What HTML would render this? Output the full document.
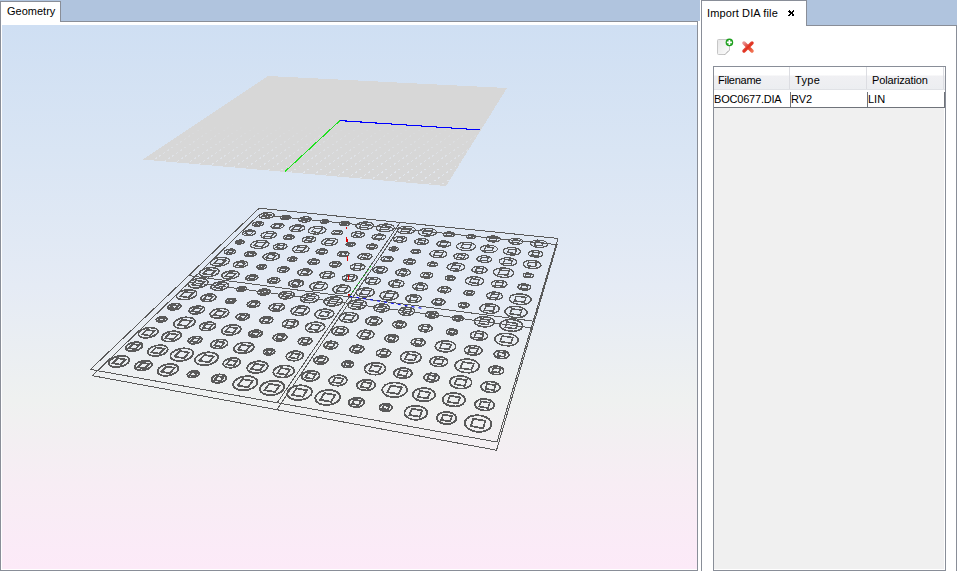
<!DOCTYPE html>
<html><head><meta charset="utf-8"><style>
*{margin:0;padding:0;box-sizing:border-box}
html,body{width:957px;height:571px;overflow:hidden;background:#b0c4de;font-family:"Liberation Sans",sans-serif;font-size:11px;color:#000}
.abs{position:absolute}
</style></head><body>
<div class="abs" style="left:0;top:21px;width:698px;height:550px;border:1px solid #898e98;background:#fff"></div>
<div class="abs" style="left:0;top:1px;width:61px;height:21px;border:1px solid #898e98;border-bottom:none;background:#fff"></div>
<div class="abs" style="left:7px;top:5px;font-size:11px">Geometry</div>
<svg width="695" height="544" viewBox="2 25 695 544" style="position:absolute;left:2px;top:25px">
<defs><linearGradient id="bg" x1="0" y1="0" x2="0" y2="1">
<stop offset="0" stop-color="rgb(207,223,243)"/><stop offset="0.23" stop-color="rgb(217,229,244)"/><stop offset="0.48" stop-color="rgb(229,235,245)"/><stop offset="0.69" stop-color="rgb(239,241,240)"/><stop offset="0.84" stop-color="rgb(247,237,244)"/><stop offset="1" stop-color="rgb(252,234,248)"/></linearGradient></defs>
<rect x="2" y="25" width="695" height="544" fill="url(#bg)"/>
<path d="M268,76 L507,88 L446,186 L143,159.5 Z" fill="#d7d7d7" shape-rendering="crispEdges"/>
<clipPath id="pc"><path d="M227.87,102.81 L487.79,118.86 L446.00,186.00 L143.00,159.50 Z"/></clipPath>
<mask id="pm"><rect x="0" y="0" width="957" height="571" fill="url(#pmg)"/></mask>
<linearGradient id="pmg" gradientUnits="userSpaceOnUse" x1="0" y1="122" x2="0" y2="172"><stop offset="0" stop-color="#000"/><stop offset="1" stop-color="#fff"/></linearGradient>
<g clip-path="url(#pc)" mask="url(#pm)"><path d="M-380.0,195.0 L-230.0,95.0 M-367.0,195.0 L-217.0,95.0 M-354.0,195.0 L-204.0,95.0 M-341.0,195.0 L-191.0,95.0 M-328.0,195.0 L-178.0,95.0 M-315.0,195.0 L-165.0,95.0 M-302.0,195.0 L-152.0,95.0 M-289.0,195.0 L-139.0,95.0 M-276.0,195.0 L-126.0,95.0 M-263.0,195.0 L-113.0,95.0 M-250.0,195.0 L-100.0,95.0 M-237.0,195.0 L-87.0,95.0 M-224.0,195.0 L-74.0,95.0 M-211.0,195.0 L-61.0,95.0 M-198.0,195.0 L-48.0,95.0 M-185.0,195.0 L-35.0,95.0 M-172.0,195.0 L-22.0,95.0 M-159.0,195.0 L-9.0,95.0 M-146.0,195.0 L4.0,95.0 M-133.0,195.0 L17.0,95.0 M-120.0,195.0 L30.0,95.0 M-107.0,195.0 L43.0,95.0 M-94.0,195.0 L56.0,95.0 M-81.0,195.0 L69.0,95.0 M-68.0,195.0 L82.0,95.0 M-55.0,195.0 L95.0,95.0 M-42.0,195.0 L108.0,95.0 M-29.0,195.0 L121.0,95.0 M-16.0,195.0 L134.0,95.0 M-3.0,195.0 L147.0,95.0 M10.0,195.0 L160.0,95.0 M23.0,195.0 L173.0,95.0 M36.0,195.0 L186.0,95.0 M49.0,195.0 L199.0,95.0 M62.0,195.0 L212.0,95.0 M75.0,195.0 L225.0,95.0 M88.0,195.0 L238.0,95.0 M101.0,195.0 L251.0,95.0 M114.0,195.0 L264.0,95.0 M127.0,195.0 L277.0,95.0 M140.0,195.0 L290.0,95.0 M153.0,195.0 L303.0,95.0 M166.0,195.0 L316.0,95.0 M179.0,195.0 L329.0,95.0 M192.0,195.0 L342.0,95.0 M205.0,195.0 L355.0,95.0 M218.0,195.0 L368.0,95.0 M231.0,195.0 L381.0,95.0 M244.0,195.0 L394.0,95.0 M257.0,195.0 L407.0,95.0 M270.0,195.0 L420.0,95.0 M283.0,195.0 L433.0,95.0 M296.0,195.0 L446.0,95.0 M309.0,195.0 L459.0,95.0 M322.0,195.0 L472.0,95.0 M335.0,195.0 L485.0,95.0 M348.0,195.0 L498.0,95.0 M361.0,195.0 L511.0,95.0 M374.0,195.0 L524.0,95.0 M387.0,195.0 L537.0,95.0 M400.0,195.0 L550.0,95.0 M413.0,195.0 L563.0,95.0 M426.0,195.0 L576.0,95.0 M439.0,195.0 L589.0,95.0 M452.0,195.0 L602.0,95.0 M465.0,195.0 L615.0,95.0 M478.0,195.0 L628.0,95.0 M491.0,195.0 L641.0,95.0 M504.0,195.0 L654.0,95.0 M517.0,195.0 L667.0,95.0 M530.0,195.0 L680.0,95.0 M543.0,195.0 L693.0,95.0 M556.0,195.0 L706.0,95.0 M569.0,195.0 L719.0,95.0 M582.0,195.0 L732.0,95.0 M595.0,195.0 L745.0,95.0 M608.0,195.0 L758.0,95.0 M621.0,195.0 L771.0,95.0 M634.0,195.0 L784.0,95.0 M647.0,195.0 L797.0,95.0 M660.0,195.0 L810.0,95.0 M673.0,195.0 L823.0,95.0 M686.0,195.0 L836.0,95.0 M699.0,195.0 L849.0,95.0 M712.0,195.0 L862.0,95.0 M725.0,195.0 L875.0,95.0 M738.0,195.0 L888.0,95.0 M751.0,195.0 L901.0,95.0 M764.0,195.0 L914.0,95.0 M777.0,195.0 L927.0,95.0 M790.0,195.0 L940.0,95.0 M803.0,195.0 L953.0,95.0 M816.0,195.0 L966.0,95.0 M829.0,195.0 L979.0,95.0 M842.0,195.0 L992.0,95.0 M855.0,195.0 L1005.0,95.0 M868.0,195.0 L1018.0,95.0 M881.0,195.0 L1031.0,95.0 M894.0,195.0 L1044.0,95.0 M907.0,195.0 L1057.0,95.0 M920.0,195.0 L1070.0,95.0 M933.0,195.0 L1083.0,95.0 M946.0,195.0 L1096.0,95.0 M959.0,195.0 L1109.0,95.0 M972.0,195.0 L1122.0,95.0 M985.0,195.0 L1135.0,95.0 M998.0,195.0 L1148.0,95.0 M1011.0,195.0 L1161.0,95.0 M1024.0,195.0 L1174.0,95.0 M1037.0,195.0 L1187.0,95.0 M1050.0,195.0 L1200.0,95.0 M1063.0,195.0 L1213.0,95.0 M1076.0,195.0 L1226.0,95.0 M1089.0,195.0 L1239.0,95.0 M1102.0,195.0 L1252.0,95.0 M1115.0,195.0 L1265.0,95.0 M1128.0,195.0 L1278.0,95.0 M1141.0,195.0 L1291.0,95.0 M1154.0,195.0 L1304.0,95.0 M1167.0,195.0 L1317.0,95.0" stroke="#e2e7ee" stroke-width="1" stroke-dasharray="2,3" fill="none" shape-rendering="crispEdges"/></g>
<path d="M285.3,171.3 L340,120.5" stroke="#1fe01f" stroke-width="1.1" fill="none" shape-rendering="crispEdges"/>
<path d="M340,120.6 L480,129.9" stroke="#0000ff" stroke-width="1.1" fill="none" shape-rendering="crispEdges"/>
<g fill="none" stroke="#5a5a5a" stroke-width="1" shape-rendering="crispEdges">
<path d="M259.20,208.20 L558.00,238.40 L497.00,442.00 L90.50,369.40 Z M400.07,222.44 L277.24,402.75 M188.65,275.62 L533.21,321.16 M259.20,214.70 L557.00,244.60 L496.50,450.20 L92.40,375.70 Z M398.99,228.73 L276.85,409.70 M189.39,282.08 L532.45,328.05"/>
</g>
<g>
</g><g fill="none" stroke="#5a5a5a" stroke-width="1.20" shape-rendering="crispEdges"><path d="M273.52,216.20 L271.82,217.32 L269.33,218.16 L266.40,218.59 L263.51,218.54 L261.10,218.03 L259.54,217.13 L259.07,215.99 L259.74,214.77 L261.45,213.67 L263.93,212.85 L266.81,212.43 L269.66,212.47 L272.05,212.96 L273.63,213.84 L274.15,214.98 Z M264.86,213.76 L271.18,214.42 L268.37,217.22 L262.02,216.55 Z"/><path d="M290.52,217.96 L289.37,218.75 L287.63,219.34 L285.59,219.65 L283.55,219.62 L281.83,219.25 L280.70,218.62 L280.32,217.81 L280.75,216.95 L281.92,216.17 L283.64,215.59 L285.66,215.29 L287.68,215.32 L289.39,215.67 L290.53,216.30 L290.93,217.10 Z M284.33,216.24 L288.82,216.70 L286.93,218.68 L282.42,218.21 Z"/><path d="M310.94,220.08 L309.58,221.04 L307.50,221.77 L305.02,222.14 L302.54,222.10 L300.42,221.66 L299.00,220.88 L298.50,219.89 L298.97,218.84 L300.35,217.89 L302.41,217.18 L304.86,216.81 L307.32,216.85 L309.42,217.28 L310.85,218.05 L311.38,219.03 Z M303.29,217.97 L308.79,218.54 L306.60,220.96 L301.08,220.38 Z"/><path d="M328.62,221.91 L327.73,222.56 L326.35,223.05 L324.70,223.30 L323.03,223.27 L321.59,222.97 L320.61,222.45 L320.23,221.78 L320.51,221.07 L321.41,220.43 L322.78,219.95 L324.41,219.70 L326.07,219.73 L327.51,220.02 L328.49,220.54 L328.88,221.20 Z M323.40,220.49 L327.12,220.87 L325.72,222.50 L321.99,222.11 Z"/><path d="M349.61,224.09 L348.54,224.91 L346.84,225.52 L344.77,225.84 L342.66,225.80 L340.84,225.43 L339.57,224.76 L339.06,223.92 L339.37,223.03 L340.46,222.22 L342.15,221.61 L344.19,221.31 L346.28,221.34 L348.10,221.71 L349.37,222.36 L349.90,223.20 Z M342.96,222.29 L347.66,222.78 L346.01,224.83 L341.29,224.34 Z"/><path d="M373.22,226.54 L371.52,227.89 L368.77,228.91 L365.39,229.43 L361.91,229.37 L358.86,228.74 L356.73,227.65 L355.83,226.26 L356.28,224.78 L358.01,223.45 L360.74,222.46 L364.07,221.96 L367.49,222.01 L370.50,222.61 L372.65,223.68 L373.61,225.06 Z M362.12,223.57 L369.89,224.37 L367.35,227.77 L359.53,226.95 Z"/><path d="M393.92,228.69 L392.27,230.06 L389.54,231.08 L386.15,231.61 L382.63,231.55 L379.52,230.91 L377.31,229.80 L376.33,228.39 L376.71,226.90 L378.39,225.55 L381.10,224.55 L384.44,224.04 L387.90,224.10 L390.97,224.71 L393.20,225.79 L394.24,227.19 Z M382.56,225.68 L390.44,226.49 L388.05,229.93 L380.10,229.10 Z"/><path d="M414.95,230.87 L413.36,232.26 L410.65,233.30 L407.25,233.83 L403.68,233.77 L400.51,233.12 L398.22,231.99 L397.16,230.57 L397.47,229.05 L399.10,227.69 L401.79,226.67 L405.13,226.16 L408.63,226.21 L411.77,226.84 L414.08,227.94 L415.20,229.35 Z M403.31,227.82 L411.33,228.64 L409.08,232.12 L401.01,231.28 Z"/><path d="M436.33,233.08 L434.79,234.49 L432.10,235.55 L428.69,236.08 L425.09,236.02 L421.84,235.36 L419.47,234.22 L418.32,232.77 L418.56,231.24 L420.14,229.86 L422.80,228.83 L426.16,228.31 L429.70,228.37 L432.91,229.00 L435.30,230.11 L436.50,231.55 Z M424.41,229.99 L432.55,230.83 L430.46,234.36 L422.25,233.50 Z"/><path d="M454.56,234.97 L453.64,235.85 L452.01,236.50 L449.91,236.83 L447.68,236.79 L445.65,236.39 L444.13,235.68 L443.37,234.78 L443.46,233.82 L444.39,232.96 L446.02,232.32 L448.09,231.99 L450.30,232.03 L452.32,232.43 L453.84,233.12 L454.62,234.02 Z M447.05,233.04 L452.15,233.57 L450.95,235.76 L445.84,235.23 Z"/><path d="M475.48,237.14 L474.77,237.85 L473.47,238.39 L471.78,238.66 L469.96,238.62 L468.30,238.29 L467.04,237.72 L466.37,236.98 L466.41,236.20 L467.13,235.50 L468.42,234.98 L470.10,234.71 L471.90,234.74 L473.55,235.07 L474.82,235.64 L475.49,236.37 Z M469.30,235.57 L473.46,236.00 L472.58,237.79 L468.40,237.35 Z"/><path d="M500.17,239.71 L499.15,240.79 L497.22,241.60 L494.68,242.01 L491.91,241.96 L489.36,241.45 L487.40,240.57 L486.34,239.45 L486.34,238.27 L487.38,237.20 L489.30,236.41 L491.82,236.01 L494.54,236.05 L497.08,236.55 L499.04,237.41 L500.13,238.52 Z M490.67,237.31 L497.02,237.96 L495.83,240.68 L489.45,240.02 Z"/><path d="M522.97,242.07 L521.99,243.17 L520.09,243.99 L517.53,244.40 L514.73,244.35 L512.12,243.84 L510.10,242.94 L508.97,241.81 L508.90,240.61 L509.90,239.53 L511.80,238.72 L514.32,238.32 L517.08,238.37 L519.67,238.87 L521.70,239.74 L522.86,240.87 Z M513.23,239.63 L519.68,240.30 L518.62,243.06 L512.13,242.38 Z"/><path d="M547.49,244.61 L546.40,245.93 L544.16,246.92 L541.12,247.43 L537.75,247.36 L534.58,246.74 L532.09,245.66 L530.67,244.29 L530.52,242.85 L531.65,241.55 L533.88,240.59 L536.87,240.10 L540.19,240.16 L543.33,240.76 L545.82,241.81 L547.29,243.17 Z M535.65,241.68 L543.43,242.48 L542.34,245.80 L534.50,244.98 Z"/></g><g fill="none" stroke="#5a5a5a" stroke-width="1.25" shape-rendering="crispEdges"><path d="M262.92,224.50 L261.70,225.31 L259.91,225.92 L257.83,226.23 L255.78,226.20 L254.07,225.83 L252.97,225.17 L252.64,224.34 L253.14,223.45 L254.37,222.65 L256.15,222.05 L258.21,221.75 L260.24,221.78 L261.94,222.14 L263.05,222.79 L263.40,223.62 Z M256.80,222.72 L261.30,223.20 L259.25,225.24 L254.74,224.75 Z"/><path d="M283.37,226.70 L281.93,227.69 L279.78,228.44 L277.26,228.82 L274.75,228.77 L272.65,228.31 L271.27,227.51 L270.83,226.49 L271.38,225.41 L272.84,224.44 L274.97,223.71 L277.46,223.33 L279.94,223.37 L282.03,223.82 L283.42,224.61 L283.89,225.62 Z M275.80,224.52 L281.31,225.11 L278.93,227.60 L273.41,227.00 Z"/><path d="M304.26,228.95 L302.59,230.14 L300.05,231.03 L297.04,231.49 L294.03,231.44 L291.48,230.89 L289.78,229.92 L289.20,228.69 L289.80,227.39 L291.49,226.22 L294.01,225.35 L296.97,224.90 L299.94,224.95 L302.47,225.48 L304.19,226.43 L304.82,227.65 Z M295.05,226.33 L301.68,227.04 L298.98,230.03 L292.31,229.31 Z"/><path d="M325.34,231.22 L323.49,232.59 L320.63,233.62 L317.19,234.15 L313.73,234.08 L310.76,233.45 L308.76,232.33 L308.02,230.92 L308.65,229.42 L310.53,228.07 L313.37,227.06 L316.74,226.55 L320.16,226.61 L323.09,227.23 L325.11,228.31 L325.91,229.71 Z M314.62,228.19 L322.27,229.01 L319.34,232.46 L311.64,231.62 Z"/><path d="M342.47,233.06 L341.36,233.91 L339.61,234.55 L337.50,234.87 L335.35,234.83 L333.50,234.44 L332.22,233.75 L331.71,232.87 L332.05,231.94 L333.17,231.09 L334.91,230.46 L336.99,230.14 L339.12,230.18 L340.97,230.57 L342.25,231.25 L342.78,232.12 Z M335.72,231.17 L340.51,231.68 L338.78,233.83 L333.98,233.31 Z"/><path d="M364.26,235.40 L362.96,236.44 L360.87,237.22 L358.31,237.62 L355.69,237.57 L353.40,237.09 L351.80,236.24 L351.13,235.16 L351.48,234.03 L352.80,233.00 L354.88,232.23 L357.41,231.84 L360.00,231.89 L362.27,232.36 L363.88,233.19 L364.58,234.26 Z M355.92,233.09 L361.78,233.72 L359.81,236.34 L353.92,235.70 Z"/><path d="M385.31,237.66 L384.05,238.72 L381.97,239.51 L379.41,239.91 L376.75,239.86 L374.41,239.37 L372.75,238.51 L372.02,237.42 L372.32,236.27 L373.61,235.22 L375.67,234.45 L378.20,234.05 L380.82,234.10 L383.14,234.58 L384.81,235.42 L385.58,236.51 Z M376.76,235.32 L382.72,235.96 L380.86,238.62 L374.87,237.97 Z"/><path d="M406.71,239.96 L405.48,241.03 L403.43,241.83 L400.85,242.24 L398.16,242.19 L395.77,241.69 L394.05,240.82 L393.26,239.71 L393.51,238.54 L394.75,237.49 L396.80,236.70 L399.34,236.30 L401.99,236.35 L404.36,236.84 L406.09,237.69 L406.92,238.79 Z M397.94,237.59 L404.00,238.24 L402.25,240.93 L396.17,240.27 Z"/><path d="M428.46,242.30 L427.28,243.39 L425.24,244.20 L422.66,244.61 L419.93,244.56 L417.49,244.05 L415.71,243.17 L414.85,242.04 L415.04,240.86 L416.24,239.79 L418.27,238.99 L420.82,238.59 L423.51,238.64 L425.93,239.13 L427.72,240.00 L428.61,241.11 Z M419.48,239.89 L425.63,240.55 L424.01,243.28 L417.82,242.61 Z"/><path d="M450.58,244.68 L449.44,245.78 L447.42,246.60 L444.83,247.02 L442.07,246.96 L439.58,246.45 L437.73,245.55 L436.80,244.41 L436.93,243.21 L438.09,242.13 L440.10,241.32 L442.66,240.91 L445.38,240.97 L447.85,241.47 L449.71,242.35 L450.67,243.47 Z M441.37,242.23 L447.63,242.90 L446.12,245.67 L439.83,244.99 Z"/><path d="M475.51,247.36 L474.03,248.87 L471.33,250.00 L467.82,250.57 L464.05,250.49 L460.60,249.78 L458.01,248.55 L456.68,246.99 L456.78,245.35 L458.30,243.87 L460.98,242.77 L464.43,242.21 L468.14,242.28 L471.55,242.97 L474.15,244.17 L475.54,245.71 Z M462.76,244.01 L471.35,244.93 L469.50,248.71 L460.85,247.78 Z"/><path d="M497.27,249.70 L496.03,251.04 L493.68,252.05 L490.58,252.56 L487.22,252.49 L484.13,251.85 L481.77,250.75 L480.50,249.37 L480.52,247.90 L481.80,246.58 L484.14,245.60 L487.18,245.10 L490.49,245.17 L493.55,245.78 L495.92,246.85 L497.23,248.23 Z M485.78,246.71 L493.46,247.53 L491.99,250.91 L484.25,250.07 Z"/><path d="M520.56,252.20 L519.38,253.57 L517.05,254.58 L513.95,255.10 L510.55,255.03 L507.38,254.38 L504.94,253.27 L503.58,251.86 L503.52,250.37 L504.74,249.03 L507.06,248.04 L510.12,247.54 L513.46,247.60 L516.59,248.23 L519.05,249.32 L520.44,250.71 Z M508.78,249.17 L516.59,250.00 L515.28,253.43 L507.42,252.57 Z"/><path d="M542.89,254.60 L541.93,255.77 L540.00,256.63 L537.38,257.07 L534.48,257.01 L531.76,256.46 L529.62,255.51 L528.40,254.31 L528.28,253.03 L529.26,251.89 L531.19,251.04 L533.77,250.61 L536.63,250.67 L539.33,251.20 L541.47,252.13 L542.72,253.33 Z M532.71,252.01 L539.41,252.72 L538.44,255.65 L531.70,254.92 Z"/></g><g fill="none" stroke="#5a5a5a" stroke-width="1.29" shape-rendering="crispEdges"><path d="M255.10,233.49 L253.57,234.51 L251.35,235.27 L248.78,235.66 L246.26,235.62 L244.17,235.14 L242.84,234.32 L242.46,233.27 L243.09,232.16 L244.63,231.15 L246.84,230.40 L249.37,230.02 L251.87,230.06 L253.95,230.53 L255.29,231.34 L255.70,232.38 Z M247.62,231.24 L253.13,231.86 L250.56,234.41 L245.02,233.79 Z"/><path d="M276.01,235.83 L274.24,237.05 L271.62,237.97 L268.56,238.44 L265.52,238.38 L262.99,237.81 L261.34,236.81 L260.84,235.55 L261.54,234.21 L263.32,233.00 L265.92,232.11 L268.95,231.65 L271.94,231.70 L274.45,232.26 L276.11,233.23 L276.67,234.48 Z M266.91,233.12 L273.55,233.85 L270.62,236.93 L263.94,236.18 Z"/><path d="M293.89,237.82 L292.68,238.69 L290.87,239.33 L288.72,239.66 L286.58,239.62 L284.77,239.22 L283.58,238.51 L283.17,237.62 L283.61,236.67 L284.83,235.82 L286.64,235.18 L288.76,234.86 L290.88,234.90 L292.68,235.29 L293.89,235.98 L294.31,236.87 Z M287.37,235.90 L292.09,236.42 L290.12,238.60 L285.38,238.07 Z"/><path d="M315.37,240.21 L313.95,241.27 L311.77,242.07 L309.17,242.47 L306.56,242.42 L304.33,241.92 L302.83,241.06 L302.29,239.97 L302.78,238.81 L304.21,237.77 L306.38,236.99 L308.94,236.59 L311.53,236.64 L313.74,237.12 L315.25,237.97 L315.82,239.05 Z M307.31,237.87 L313.09,238.51 L310.82,241.17 L305.01,240.52 Z"/><path d="M337.33,242.66 L335.68,243.94 L333.12,244.89 L330.02,245.38 L326.87,245.31 L324.17,244.72 L322.32,243.68 L321.61,242.36 L322.13,240.97 L323.80,239.71 L326.35,238.78 L329.40,238.31 L332.50,238.37 L335.18,238.95 L337.04,239.96 L337.80,241.27 Z M327.51,239.84 L334.48,240.61 L331.92,243.81 L324.91,243.02 Z"/><path d="M355.04,244.64 L354.14,245.36 L352.71,245.90 L350.97,246.18 L349.19,246.14 L347.64,245.80 L346.56,245.21 L346.11,244.46 L346.36,243.67 L347.27,242.95 L348.70,242.42 L350.42,242.15 L352.19,242.18 L353.73,242.52 L354.81,243.10 L355.28,243.84 Z M349.39,243.02 L353.38,243.47 L352.00,245.29 L348.01,244.84 Z"/><path d="M377.53,247.15 L376.45,248.06 L374.68,248.74 L372.51,249.09 L370.26,249.04 L368.29,248.61 L366.90,247.87 L366.29,246.92 L366.56,245.92 L367.66,245.02 L369.41,244.35 L371.57,244.01 L373.79,244.05 L375.75,244.47 L377.15,245.21 L377.78,246.14 Z M370.33,245.11 L375.36,245.67 L373.75,247.97 L368.69,247.40 Z"/><path d="M398.23,249.45 L397.38,250.20 L395.97,250.75 L394.22,251.03 L392.39,250.99 L390.78,250.64 L389.61,250.04 L389.08,249.27 L389.25,248.45 L390.11,247.72 L391.51,247.17 L393.25,246.89 L395.06,246.93 L396.67,247.27 L397.84,247.87 L398.39,248.64 Z M392.29,247.79 L396.40,248.25 L395.19,250.12 L391.05,249.66 Z"/><path d="M420.37,251.92 L419.55,252.68 L418.16,253.24 L416.40,253.52 L414.55,253.48 L412.89,253.13 L411.69,252.51 L411.11,251.73 L411.24,250.91 L412.07,250.16 L413.46,249.60 L415.20,249.32 L417.04,249.36 L418.68,249.71 L419.90,250.32 L420.49,251.09 Z M414.28,250.23 L418.47,250.70 L417.33,252.60 L413.12,252.13 Z"/><path d="M446.53,254.84 L445.13,256.20 L442.67,257.22 L439.52,257.74 L436.18,257.67 L433.15,257.02 L430.92,255.90 L429.82,254.49 L430.01,253.00 L431.43,251.65 L433.88,250.66 L436.99,250.16 L440.28,250.23 L443.27,250.85 L445.51,251.94 L446.66,253.34 Z M435.40,251.79 L442.97,252.63 L441.11,256.06 L433.49,255.21 Z"/><path d="M468.17,257.25 L467.04,258.42 L464.99,259.29 L462.33,259.72 L459.48,259.66 L456.88,259.11 L454.93,258.16 L453.92,256.95 L454.01,255.67 L455.17,254.53 L457.21,253.67 L459.84,253.25 L462.65,253.30 L465.22,253.84 L467.18,254.78 L468.22,255.97 Z M458.56,254.64 L465.05,255.36 L463.61,258.30 L457.08,257.56 Z"/><path d="M491.52,259.86 L490.44,261.04 L488.41,261.92 L485.74,262.36 L482.85,262.30 L480.19,261.74 L478.17,260.77 L477.09,259.54 L477.12,258.25 L478.23,257.09 L480.25,256.22 L482.88,255.79 L485.73,255.85 L488.36,256.39 L490.39,257.34 L491.51,258.56 Z M481.66,257.21 L488.27,257.94 L486.97,260.91 L480.32,260.17 Z"/><path d="M516.67,262.66 L515.44,264.08 L513.06,265.15 L509.88,265.68 L506.40,265.60 L503.17,264.92 L500.68,263.75 L499.31,262.28 L499.26,260.72 L500.52,259.32 L502.90,258.28 L506.03,257.76 L509.45,257.84 L512.64,258.49 L515.14,259.63 L516.56,261.10 Z M504.65,259.47 L512.63,260.35 L511.26,263.93 L503.22,263.03 Z"/><path d="M540.88,265.36 L539.71,266.80 L537.36,267.88 L534.17,268.42 L530.65,268.34 L527.34,267.65 L524.76,266.46 L523.30,264.96 L523.16,263.38 L524.37,261.96 L526.71,260.91 L529.85,260.39 L533.31,260.46 L536.58,261.13 L539.17,262.29 L540.68,263.77 Z M528.55,262.11 L536.67,263.01 L535.47,266.65 L527.29,265.73 Z"/></g><g fill="none" stroke="#5a5a5a" stroke-width="1.34" shape-rendering="crispEdges"><path d="M243.84,242.51 L242.79,243.22 L241.27,243.75 L239.52,244.01 L237.80,243.98 L236.39,243.65 L235.50,243.08 L235.26,242.35 L235.70,241.57 L236.76,240.87 L238.27,240.35 L240.01,240.09 L241.71,240.12 L243.11,240.45 L244.01,241.01 L244.27,241.74 Z M238.79,240.94 L242.53,241.37 L240.74,243.15 L236.99,242.71 Z"/><path d="M268.18,245.33 L266.10,246.78 L263.04,247.87 L259.46,248.43 L255.94,248.35 L253.01,247.67 L251.13,246.48 L250.58,244.98 L251.43,243.39 L253.54,241.96 L256.57,240.90 L260.08,240.37 L263.55,240.43 L266.45,241.09 L268.36,242.25 L268.97,243.74 Z M257.69,242.10 L265.37,242.99 L261.89,246.64 L254.16,245.74 Z"/><path d="M286.45,247.44 L284.94,248.53 L282.68,249.35 L280.03,249.76 L277.40,249.70 L275.18,249.19 L273.73,248.30 L273.26,247.18 L273.83,245.98 L275.35,244.91 L277.59,244.11 L280.21,243.71 L282.81,243.76 L285.01,244.26 L286.48,245.13 L286.98,246.25 Z M278.47,245.02 L284.26,245.68 L281.78,248.42 L275.97,247.75 Z"/><path d="M308.44,249.99 L306.69,251.30 L304.04,252.28 L300.87,252.78 L297.70,252.71 L295.01,252.09 L293.22,251.02 L292.59,249.66 L293.22,248.23 L294.98,246.93 L297.62,245.98 L300.74,245.49 L303.86,245.56 L306.53,246.15 L308.34,247.20 L309.01,248.55 Z M298.73,247.06 L305.71,247.87 L302.90,251.17 L295.88,250.35 Z"/><path d="M327.25,252.16 L326.06,253.09 L324.22,253.78 L322.01,254.13 L319.77,254.09 L317.85,253.65 L316.55,252.89 L316.05,251.93 L316.44,250.91 L317.64,250.00 L319.47,249.32 L321.66,248.97 L323.87,249.02 L325.78,249.45 L327.09,250.19 L327.61,251.15 Z M320.30,250.09 L325.26,250.66 L323.38,253.00 L318.40,252.42 Z"/><path d="M348.73,254.65 L347.57,255.59 L345.74,256.29 L343.52,256.64 L341.26,256.60 L339.30,256.15 L337.94,255.38 L337.39,254.41 L337.73,253.38 L338.90,252.45 L340.72,251.76 L342.92,251.41 L345.16,251.46 L347.11,251.89 L348.47,252.65 L349.04,253.62 Z M341.59,252.54 L346.64,253.12 L344.86,255.49 L339.79,254.90 Z"/><path d="M371.73,257.31 L370.38,258.46 L368.19,259.32 L365.50,259.75 L362.73,259.69 L360.31,259.15 L358.61,258.20 L357.88,257.01 L358.24,255.75 L359.61,254.61 L361.79,253.77 L364.44,253.35 L367.17,253.41 L369.58,253.94 L371.29,254.86 L372.05,256.05 Z M362.90,254.73 L369.08,255.44 L367.06,258.34 L360.84,257.62 Z"/><path d="M392.79,259.75 L391.70,260.71 L389.91,261.43 L387.67,261.80 L385.35,261.75 L383.30,261.29 L381.83,260.49 L381.17,259.49 L381.41,258.43 L382.52,257.48 L384.31,256.77 L386.52,256.41 L388.81,256.46 L390.85,256.91 L392.33,257.69 L393.01,258.68 Z M385.28,257.57 L390.50,258.18 L388.92,260.61 L383.67,260.00 Z"/><path d="M415.40,262.36 L414.35,263.34 L412.56,264.07 L410.32,264.44 L407.97,264.39 L405.87,263.92 L404.35,263.12 L403.63,262.10 L403.82,261.02 L404.89,260.05 L406.66,259.34 L408.88,258.98 L411.21,259.03 L413.29,259.48 L414.82,260.27 L415.56,261.28 Z M407.69,260.16 L413.00,260.77 L411.52,263.24 L406.18,262.62 Z"/><path d="M437.24,264.89 L436.43,265.69 L435.01,266.28 L433.20,266.58 L431.29,266.54 L429.56,266.16 L428.29,265.50 L427.66,264.67 L427.77,263.79 L428.60,263.00 L430.01,262.42 L431.80,262.12 L433.70,262.17 L435.41,262.54 L436.69,263.19 L437.33,264.01 Z M430.88,263.09 L435.23,263.59 L434.13,265.60 L429.76,265.10 Z"/><path d="M464.41,268.03 L463.02,269.48 L460.52,270.56 L457.28,271.10 L453.82,271.02 L450.67,270.33 L448.32,269.14 L447.12,267.63 L447.25,266.05 L448.67,264.62 L451.16,263.57 L454.35,263.04 L457.75,263.12 L460.87,263.79 L463.23,264.95 L464.48,266.44 Z M452.78,264.78 L460.64,265.68 L458.86,269.32 L450.94,268.40 Z"/><path d="M486.90,270.64 L485.78,271.87 L483.69,272.79 L480.96,273.25 L478.01,273.18 L475.29,272.59 L473.24,271.57 L472.15,270.29 L472.18,268.93 L473.33,267.71 L475.41,266.81 L478.11,266.36 L481.01,266.43 L483.70,267.00 L485.77,268.00 L486.89,269.28 Z M476.84,267.85 L483.59,268.62 L482.23,271.73 L475.44,270.95 Z"/><path d="M513.82,273.75 L512.38,275.45 L509.59,276.71 L505.88,277.34 L501.84,277.24 L498.08,276.43 L495.20,275.03 L493.63,273.26 L493.59,271.41 L495.08,269.74 L497.86,268.52 L501.50,267.90 L505.46,268.00 L509.17,268.78 L512.06,270.14 L513.70,271.89 Z M499.87,269.93 L509.14,270.99 L507.51,275.26 L498.17,274.17 Z"/><path d="M533.34,276.01 L532.66,276.86 L531.31,277.48 L529.48,277.80 L527.46,277.75 L525.57,277.34 L524.09,276.65 L523.25,275.76 L523.17,274.83 L523.87,273.99 L525.22,273.37 L527.04,273.06 L529.03,273.11 L530.91,273.51 L532.39,274.20 L533.25,275.08 Z M526.28,274.09 L530.95,274.62 L530.23,276.76 L525.55,276.22 Z"/></g><g fill="none" stroke="#5a5a5a" stroke-width="1.38" shape-rendering="crispEdges"><path d="M235.21,252.28 L233.85,253.20 L231.91,253.88 L229.67,254.23 L227.50,254.18 L225.71,253.75 L224.60,253.00 L224.31,252.05 L224.90,251.04 L226.27,250.14 L228.20,249.46 L230.41,249.12 L232.56,249.17 L234.34,249.59 L235.46,250.33 L235.77,251.27 Z M228.84,250.23 L233.57,250.79 L231.25,253.10 L226.50,252.53 Z"/><path d="M255.66,254.74 L254.33,255.67 L252.40,256.36 L250.16,256.71 L247.96,256.66 L246.13,256.22 L244.97,255.46 L244.64,254.50 L245.19,253.48 L246.52,252.56 L248.44,251.88 L250.66,251.53 L252.84,251.58 L254.65,252.01 L255.83,252.76 L256.18,253.72 Z M249.13,252.65 L253.94,253.23 L251.70,255.57 L246.87,254.99 Z"/><path d="M278.77,257.51 L276.92,258.86 L274.16,259.87 L270.94,260.38 L267.74,260.31 L265.07,259.67 L263.33,258.56 L262.79,257.16 L263.52,255.68 L265.40,254.35 L268.13,253.36 L271.31,252.87 L274.45,252.94 L277.10,253.56 L278.86,254.64 L279.45,256.03 Z M269.17,254.49 L276.16,255.32 L273.10,258.72 L266.06,257.87 Z"/><path d="M296.55,259.65 L295.53,260.41 L294.00,260.99 L292.19,261.27 L290.37,261.23 L288.84,260.87 L287.82,260.24 L287.47,259.44 L287.84,258.60 L288.87,257.84 L290.39,257.28 L292.19,256.99 L293.98,257.03 L295.51,257.39 L296.53,258.01 L296.90,258.80 Z M291.02,257.92 L295.02,258.40 L293.36,260.33 L289.35,259.85 Z"/><path d="M319.13,262.36 L317.90,263.33 L316.01,264.05 L313.74,264.41 L311.46,264.36 L309.50,263.90 L308.19,263.10 L307.70,262.10 L308.11,261.04 L309.36,260.08 L311.24,259.37 L313.48,259.01 L315.74,259.06 L317.68,259.51 L319.01,260.29 L319.52,261.29 Z M312.07,260.18 L317.13,260.78 L315.17,263.22 L310.08,262.61 Z"/><path d="M341.02,264.99 L339.82,265.97 L337.94,266.70 L335.67,267.07 L333.36,267.02 L331.36,266.55 L329.99,265.74 L329.45,264.72 L329.81,263.64 L331.02,262.67 L332.90,261.95 L335.14,261.59 L337.43,261.64 L339.42,262.10 L340.80,262.89 L341.36,263.91 Z M333.77,262.77 L338.92,263.39 L337.05,265.86 L331.88,265.24 Z"/><path d="M364.48,267.80 L363.07,269.01 L360.82,269.90 L358.07,270.35 L355.24,270.29 L352.78,269.71 L351.05,268.72 L350.34,267.47 L350.72,266.15 L352.14,264.97 L354.38,264.09 L357.10,263.65 L359.89,263.71 L362.33,264.27 L364.07,265.24 L364.82,266.48 Z M355.49,265.09 L361.80,265.85 L359.69,268.88 L353.34,268.11 Z"/><path d="M387.16,270.53 L385.80,271.75 L383.57,272.66 L380.81,273.11 L377.94,273.04 L375.42,272.46 L373.63,271.46 L372.84,270.19 L373.16,268.85 L374.54,267.64 L376.76,266.76 L379.49,266.31 L382.31,266.38 L384.82,266.94 L386.62,267.93 L387.45,269.19 Z M377.94,267.77 L384.36,268.54 L382.37,271.62 L375.91,270.84 Z"/><path d="M410.25,273.30 L408.94,274.54 L406.73,275.46 L403.96,275.92 L401.05,275.85 L398.47,275.26 L396.61,274.24 L395.75,272.95 L396.00,271.59 L397.34,270.37 L399.54,269.47 L402.28,269.02 L405.14,269.09 L407.70,269.66 L409.57,270.66 L410.47,271.94 Z M400.78,270.50 L407.32,271.28 L405.46,274.40 L398.89,273.61 Z"/><path d="M432.51,275.98 L431.46,277.02 L429.65,277.79 L427.34,278.18 L424.91,278.12 L422.72,277.62 L421.11,276.76 L420.33,275.67 L420.49,274.53 L421.55,273.50 L423.36,272.74 L425.64,272.36 L428.05,272.42 L430.22,272.91 L431.83,273.75 L432.64,274.83 Z M424.45,273.62 L429.97,274.28 L428.54,276.90 L422.99,276.23 Z"/><path d="M455.22,278.70 L454.40,279.55 L452.96,280.18 L451.10,280.50 L449.12,280.44 L447.32,280.04 L445.98,279.34 L445.29,278.45 L445.37,277.52 L446.19,276.68 L447.63,276.06 L449.47,275.75 L451.44,275.80 L453.23,276.20 L454.57,276.89 L455.27,277.77 Z M448.56,276.77 L453.08,277.31 L452.02,279.46 L447.48,278.91 Z"/><path d="M483.47,282.10 L482.09,283.63 L479.55,284.78 L476.22,285.35 L472.63,285.26 L469.34,284.51 L466.85,283.24 L465.55,281.64 L465.62,279.95 L467.03,278.44 L469.57,277.32 L472.84,276.77 L476.37,276.86 L479.62,277.57 L482.12,278.82 L483.47,280.40 Z M471.29,278.61 L479.47,279.59 L477.78,283.46 L469.54,282.46 Z"/><path d="M506.87,284.91 L505.76,286.22 L503.64,287.20 L500.84,287.68 L497.77,287.60 L494.94,286.97 L492.76,285.88 L491.58,284.51 L491.56,283.07 L492.69,281.77 L494.81,280.82 L497.58,280.34 L500.59,280.42 L503.40,281.03 L505.58,282.10 L506.81,283.46 Z M496.33,281.92 L503.36,282.76 L502.08,286.07 L495.01,285.22 Z"/><path d="M530.81,287.78 L529.94,288.89 L528.20,289.71 L525.87,290.12 L523.30,290.05 L520.89,289.51 L519.02,288.60 L517.96,287.44 L517.87,286.23 L518.77,285.14 L520.50,284.33 L522.81,283.93 L525.35,284.00 L527.73,284.52 L529.61,285.42 L530.70,286.56 Z M521.83,285.26 L527.77,285.97 L526.84,288.76 L520.88,288.04 Z"/></g><g fill="none" stroke="#5a5a5a" stroke-width="1.43" shape-rendering="crispEdges"><path d="M228.46,262.77 L226.17,264.33 L222.91,265.50 L219.18,266.09 L215.55,266.00 L212.60,265.25 L210.78,263.97 L210.36,262.35 L211.39,260.64 L213.70,259.10 L216.93,257.97 L220.60,257.40 L224.16,257.48 L227.09,258.20 L228.94,259.45 L229.42,261.05 Z M217.96,259.27 L225.78,260.23 L221.85,264.16 L213.97,263.17 Z"/><path d="M247.08,265.09 L245.42,266.26 L243.02,267.14 L240.25,267.57 L237.53,267.51 L235.30,266.95 L233.89,265.99 L233.51,264.77 L234.22,263.49 L235.89,262.33 L238.27,261.48 L241.01,261.05 L243.68,261.11 L245.90,261.65 L247.33,262.60 L247.75,263.80 Z M239.09,262.45 L244.99,263.19 L242.18,266.14 L236.25,265.39 Z"/><path d="M266.09,267.46 L265.01,268.25 L263.42,268.84 L261.57,269.14 L259.74,269.09 L258.22,268.72 L257.24,268.07 L256.94,267.24 L257.37,266.37 L258.46,265.59 L260.04,265.01 L261.87,264.72 L263.68,264.76 L265.20,265.13 L266.19,265.77 L266.50,266.59 Z M260.62,265.68 L264.63,266.17 L262.82,268.17 L258.80,267.66 Z"/><path d="M288.71,270.28 L287.40,271.28 L285.43,272.03 L283.12,272.40 L280.82,272.34 L278.88,271.86 L277.60,271.04 L277.18,270.00 L277.67,268.91 L279.00,267.92 L280.95,267.19 L283.24,266.83 L285.51,266.88 L287.44,267.35 L288.73,268.15 L289.18,269.19 Z M281.73,268.03 L286.79,268.66 L284.64,271.17 L279.55,270.54 Z"/><path d="M311.80,273.16 L310.26,274.39 L307.91,275.30 L305.11,275.75 L302.29,275.68 L299.90,275.10 L298.29,274.09 L297.72,272.82 L298.26,271.48 L299.82,270.27 L302.16,269.38 L304.92,268.93 L307.70,269.00 L310.08,269.57 L311.69,270.56 L312.30,271.82 Z M303.15,270.40 L309.36,271.17 L306.89,274.25 L300.65,273.47 Z"/><path d="M334.15,275.95 L332.65,277.19 L330.31,278.12 L327.50,278.58 L324.64,278.50 L322.19,277.91 L320.52,276.88 L319.88,275.59 L320.36,274.23 L321.88,273.01 L324.20,272.11 L326.97,271.65 L329.79,271.72 L332.22,272.30 L333.91,273.31 L334.58,274.59 Z M325.25,273.14 L331.58,273.93 L329.23,277.05 L322.87,276.26 Z"/><path d="M356.89,278.79 L355.43,280.05 L353.11,280.98 L350.29,281.45 L347.40,281.38 L344.89,280.77 L343.15,279.73 L342.44,278.42 L342.85,277.04 L344.33,275.80 L346.63,274.88 L349.42,274.42 L352.27,274.49 L354.76,275.08 L356.51,276.10 L357.26,277.40 Z M347.75,275.93 L354.19,276.73 L351.97,279.90 L345.49,279.09 Z"/><path d="M380.04,281.68 L378.63,282.95 L376.33,283.90 L373.50,284.38 L370.57,284.30 L368.00,283.68 L366.18,282.63 L365.40,281.30 L365.75,279.89 L367.18,278.63 L369.46,277.70 L372.26,277.24 L375.15,277.32 L377.69,277.91 L379.52,278.95 L380.35,280.27 Z M370.65,278.78 L377.20,279.59 L375.12,282.81 L368.53,281.98 Z"/><path d="M403.61,284.62 L402.25,285.91 L399.97,286.88 L397.13,287.36 L394.16,287.28 L391.53,286.65 L389.64,285.58 L388.78,284.22 L389.06,282.80 L390.45,281.52 L392.71,280.58 L395.51,280.11 L398.44,280.19 L401.05,280.79 L402.95,281.85 L403.85,283.19 Z M393.96,281.67 L400.64,282.50 L398.69,285.76 L391.98,284.92 Z"/><path d="M427.62,287.61 L426.30,288.93 L424.05,289.91 L421.20,290.39 L418.19,290.31 L415.49,289.67 L413.53,288.58 L412.58,287.21 L412.80,285.76 L414.13,284.46 L416.38,283.51 L419.19,283.03 L422.16,283.11 L424.83,283.73 L426.81,284.80 L427.79,286.16 Z M417.70,284.61 L424.50,285.46 L422.69,288.77 L415.86,287.92 Z"/><path d="M450.77,290.50 L449.73,291.61 L447.88,292.43 L445.50,292.84 L442.98,292.77 L440.69,292.23 L438.99,291.31 L438.14,290.16 L438.26,288.94 L439.32,287.84 L441.16,287.04 L443.51,286.64 L446.00,286.70 L448.27,287.23 L449.98,288.13 L450.86,289.28 Z M442.32,287.97 L448.07,288.68 L446.69,291.48 L440.92,290.75 Z"/><path d="M474.40,293.45 L473.59,294.35 L472.12,295.02 L470.21,295.35 L468.16,295.29 L466.28,294.86 L464.85,294.11 L464.11,293.16 L464.15,292.17 L464.97,291.27 L466.44,290.61 L468.33,290.29 L470.36,290.34 L472.23,290.77 L473.66,291.51 L474.42,292.45 Z M467.42,291.38 L472.13,291.96 L471.12,294.24 L466.40,293.65 Z"/><path d="M502.35,296.93 L501.21,298.31 L499.03,299.34 L496.14,299.84 L493.01,299.75 L490.11,299.08 L487.89,297.94 L486.70,296.49 L486.69,294.98 L487.87,293.62 L490.04,292.62 L492.88,292.13 L495.97,292.21 L498.84,292.86 L501.06,293.98 L502.30,295.41 Z M491.59,293.78 L498.77,294.67 L497.44,298.15 L490.21,297.24 Z"/><path d="M531.03,300.51 L529.57,302.41 L526.66,303.81 L522.75,304.51 L518.44,304.38 L514.43,303.46 L511.32,301.88 L509.59,299.90 L509.48,297.82 L511.00,295.96 L513.90,294.60 L517.73,293.93 L521.95,294.04 L525.91,294.93 L529.03,296.47 L530.83,298.42 Z M516.09,296.18 L525.96,297.41 L524.39,302.18 L514.44,300.93 Z"/></g><g fill="none" stroke="#5a5a5a" stroke-width="1.48" shape-rendering="crispEdges"><path d="M218.01,273.32 L215.64,274.96 L212.28,276.17 L208.45,276.78 L204.75,276.69 L201.75,275.90 L199.93,274.56 L199.54,272.86 L200.63,271.07 L203.03,269.47 L206.36,268.28 L210.12,267.69 L213.75,267.78 L216.72,268.54 L218.58,269.85 L219.03,271.53 Z M207.38,269.64 L215.34,270.67 L211.23,274.78 L203.21,273.73 Z"/><path d="M238.20,275.94 L236.16,277.40 L233.22,278.48 L229.85,279.02 L226.55,278.94 L223.86,278.24 L222.18,277.04 L221.76,275.52 L222.65,273.93 L224.72,272.49 L227.63,271.44 L230.95,270.91 L234.19,270.99 L236.86,271.67 L238.57,272.84 L239.04,274.34 Z M228.59,272.65 L235.72,273.57 L232.23,277.23 L225.06,276.30 Z"/><path d="M257.43,278.43 L256.03,279.46 L253.99,280.23 L251.63,280.61 L249.31,280.55 L247.38,280.05 L246.15,279.20 L245.80,278.13 L246.37,277.00 L247.78,275.98 L249.81,275.23 L252.14,274.86 L254.44,274.92 L256.35,275.40 L257.60,276.23 L257.97,277.30 Z M250.53,276.10 L255.60,276.75 L253.26,279.35 L248.16,278.68 Z"/><path d="M279.39,281.28 L278.03,282.33 L276.01,283.10 L273.64,283.49 L271.28,283.43 L269.31,282.92 L268.02,282.06 L267.62,280.97 L268.14,279.82 L269.52,278.79 L271.53,278.03 L273.87,277.65 L276.20,277.71 L278.16,278.20 L279.46,279.05 L279.89,280.13 Z M272.30,278.91 L277.47,279.57 L275.22,282.21 L270.03,281.53 Z"/><path d="M302.94,284.33 L301.34,285.61 L298.92,286.56 L296.04,287.04 L293.16,286.96 L290.73,286.34 L289.11,285.28 L288.55,283.95 L289.13,282.54 L290.75,281.28 L293.15,280.35 L295.99,279.89 L298.83,279.96 L301.24,280.56 L302.88,281.60 L303.48,282.92 Z M294.15,281.42 L300.48,282.24 L297.90,285.47 L291.53,284.64 Z"/><path d="M327.05,287.46 L325.21,289.00 L322.35,290.15 L318.92,290.72 L315.45,290.62 L312.49,289.88 L310.48,288.60 L309.74,286.99 L310.36,285.29 L312.23,283.78 L315.07,282.66 L318.44,282.10 L321.85,282.19 L324.78,282.92 L326.81,284.17 L327.61,285.76 Z M316.32,283.95 L323.97,284.93 L321.06,288.82 L313.35,287.82 Z"/><path d="M350.28,290.47 L348.49,292.04 L345.66,293.20 L342.21,293.78 L338.70,293.68 L335.66,292.92 L333.57,291.62 L332.74,289.98 L333.28,288.27 L335.10,286.73 L337.91,285.59 L341.30,285.03 L344.75,285.12 L347.76,285.86 L349.87,287.13 L350.76,288.74 Z M339.25,286.90 L347.04,287.91 L344.28,291.85 L336.44,290.83 Z"/><path d="M373.94,293.54 L372.21,295.13 L369.40,296.31 L365.94,296.90 L362.38,296.79 L359.27,296.02 L357.09,294.70 L356.16,293.04 L356.63,291.29 L358.39,289.73 L361.18,288.58 L364.58,288.01 L368.08,288.10 L371.16,288.85 L373.36,290.14 L374.34,291.78 Z M362.60,289.91 L370.53,290.93 L367.94,294.94 L359.95,293.90 Z"/><path d="M398.04,296.66 L396.37,298.28 L393.58,299.48 L390.12,300.07 L386.51,299.97 L383.32,299.18 L381.04,297.83 L380.02,296.15 L380.40,294.37 L382.11,292.79 L384.88,291.62 L388.29,291.04 L391.83,291.14 L394.99,291.90 L397.28,293.21 L398.36,294.88 Z M386.38,292.97 L394.46,294.01 L392.04,298.08 L383.90,297.02 Z"/><path d="M421.17,299.66 L419.81,301.04 L417.49,302.06 L414.56,302.57 L411.48,302.48 L408.73,301.81 L406.73,300.66 L405.79,299.21 L406.03,297.70 L407.42,296.34 L409.73,295.33 L412.61,294.84 L415.65,294.93 L418.37,295.58 L420.38,296.70 L421.37,298.14 Z M411.07,296.50 L418.01,297.39 L416.12,300.87 L409.13,299.96 Z"/><path d="M444.84,302.73 L443.76,303.89 L441.85,304.75 L439.42,305.17 L436.83,305.10 L434.50,304.53 L432.77,303.56 L431.91,302.35 L432.05,301.07 L433.15,299.92 L435.05,299.08 L437.45,298.66 L440.01,298.73 L442.32,299.29 L444.06,300.24 L444.95,301.44 Z M436.23,300.06 L442.10,300.81 L440.65,303.75 L434.75,302.98 Z"/><path d="M469.01,305.86 L468.17,306.81 L466.66,307.51 L464.70,307.85 L462.59,307.79 L460.67,307.33 L459.22,306.54 L458.47,305.55 L458.52,304.50 L459.37,303.56 L460.88,302.87 L462.82,302.53 L464.91,302.59 L466.82,303.05 L468.27,303.82 L469.04,304.81 Z M461.88,303.67 L466.69,304.30 L465.64,306.69 L460.81,306.06 Z"/><path d="M499.12,309.76 L497.71,311.48 L495.04,312.76 L491.53,313.39 L487.71,313.27 L484.19,312.43 L481.51,310.99 L480.07,309.19 L480.09,307.30 L481.54,305.60 L484.20,304.36 L487.65,303.75 L491.40,303.86 L494.88,304.68 L497.57,306.08 L499.06,307.86 Z M486.06,305.81 L494.78,306.93 L493.12,311.27 L484.33,310.13 Z"/><path d="M526.96,313.37 L525.45,315.36 L522.45,316.84 L518.44,317.57 L514.03,317.43 L509.92,316.45 L506.75,314.78 L504.99,312.70 L504.90,310.51 L506.48,308.56 L509.46,307.13 L513.40,306.43 L517.71,306.56 L521.76,307.50 L524.95,309.12 L526.78,311.18 Z M511.69,308.80 L521.79,310.10 L520.14,315.12 L509.95,313.78 Z"/></g><g fill="none" stroke="#5a5a5a" stroke-width="1.52" shape-rendering="crispEdges"><path d="M207.07,284.37 L204.61,286.08 L201.15,287.35 L197.22,287.98 L193.44,287.88 L190.40,287.05 L188.57,285.63 L188.22,283.85 L189.38,281.98 L191.87,280.31 L195.30,279.07 L199.15,278.46 L202.86,278.55 L205.87,279.35 L207.74,280.73 L208.17,282.49 Z M196.30,280.49 L204.41,281.58 L200.11,285.88 L191.94,284.77 Z"/><path d="M227.65,287.14 L225.52,288.66 L222.50,289.80 L219.03,290.36 L215.67,290.27 L212.93,289.53 L211.24,288.26 L210.85,286.68 L211.81,285.01 L213.95,283.51 L216.95,282.40 L220.36,281.86 L223.66,281.94 L226.38,282.66 L228.10,283.89 L228.54,285.46 Z M217.91,283.68 L225.17,284.65 L221.51,288.49 L214.21,287.50 Z"/><path d="M246.13,289.63 L244.96,290.50 L243.28,291.14 L241.33,291.46 L239.42,291.40 L237.85,290.99 L236.85,290.27 L236.58,289.36 L237.07,288.41 L238.25,287.55 L239.93,286.92 L241.85,286.61 L243.74,286.66 L245.31,287.07 L246.31,287.78 L246.60,288.68 Z M240.51,287.65 L244.67,288.21 L242.69,290.40 L238.51,289.83 Z"/><path d="M269.63,292.80 L268.22,293.89 L266.13,294.71 L263.70,295.11 L261.29,295.04 L259.29,294.51 L257.99,293.60 L257.60,292.46 L258.16,291.25 L259.59,290.17 L261.66,289.38 L264.07,288.98 L266.45,289.05 L268.44,289.56 L269.75,290.46 L270.17,291.59 Z M262.44,290.30 L267.70,291.00 L265.34,293.76 L260.05,293.05 Z"/><path d="M293.65,296.04 L291.99,297.38 L289.49,298.37 L286.54,298.87 L283.59,298.78 L281.12,298.13 L279.48,297.01 L278.94,295.61 L279.56,294.14 L281.24,292.82 L283.72,291.84 L286.63,291.36 L289.53,291.44 L291.99,292.08 L293.64,293.17 L294.23,294.56 Z M284.72,292.97 L291.18,293.84 L288.47,297.22 L281.97,296.34 Z"/><path d="M318.25,299.35 L316.34,300.97 L313.39,302.17 L309.87,302.77 L306.32,302.66 L303.31,301.87 L301.28,300.52 L300.55,298.83 L301.22,297.06 L303.16,295.47 L306.09,294.30 L309.55,293.72 L313.03,293.82 L316.02,294.58 L318.07,295.89 L318.86,297.57 Z M307.34,295.65 L315.15,296.70 L312.10,300.78 L304.23,299.71 Z"/><path d="M341.97,302.55 L340.11,304.19 L337.19,305.41 L333.65,306.02 L330.06,305.91 L326.96,305.10 L324.85,303.73 L324.03,302.01 L324.61,300.21 L326.50,298.59 L329.40,297.41 L332.88,296.82 L336.41,296.92 L339.47,297.70 L341.61,299.04 L342.49,300.74 Z M330.74,298.79 L338.70,299.85 L335.81,303.99 L327.79,302.91 Z"/><path d="M366.13,305.81 L364.33,307.48 L361.43,308.71 L357.89,309.33 L354.24,309.21 L351.07,308.39 L348.86,307.00 L347.94,305.25 L348.45,303.42 L350.28,301.78 L353.16,300.58 L356.64,299.98 L360.22,300.09 L363.36,300.88 L365.59,302.24 L366.57,303.96 Z M354.58,301.98 L362.69,303.06 L359.97,307.27 L351.80,306.16 Z"/><path d="M389.33,308.93 L387.86,310.36 L385.45,311.42 L382.45,311.94 L379.34,311.84 L376.60,311.14 L374.66,309.95 L373.80,308.46 L374.15,306.89 L375.64,305.48 L378.04,304.45 L380.99,303.94 L384.05,304.03 L386.77,304.71 L388.73,305.87 L389.63,307.36 Z M379.32,305.65 L386.28,306.58 L384.14,310.18 L377.13,309.23 Z"/><path d="M414.40,312.31 L412.99,313.76 L410.60,314.84 L407.59,315.37 L404.44,315.27 L401.63,314.55 L399.60,313.34 L398.65,311.82 L398.93,310.23 L400.36,308.80 L402.75,307.75 L405.71,307.23 L408.81,307.33 L411.59,308.02 L413.64,309.20 L414.63,310.71 Z M404.10,308.97 L411.20,309.92 L409.21,313.58 L402.07,312.61 Z"/><path d="M438.61,315.57 L437.49,316.80 L435.52,317.70 L433.02,318.14 L430.38,318.06 L427.99,317.46 L426.23,316.44 L425.37,315.16 L425.53,313.81 L426.67,312.61 L428.63,311.72 L431.10,311.29 L433.71,311.37 L436.08,311.95 L437.84,312.95 L438.73,314.23 Z M429.82,312.75 L435.82,313.56 L434.31,316.64 L428.27,315.83 Z"/><path d="M463.34,318.91 L462.47,319.90 L460.91,320.64 L458.90,321.00 L456.74,320.93 L454.77,320.44 L453.30,319.61 L452.54,318.56 L452.61,317.46 L453.49,316.48 L455.05,315.75 L457.04,315.40 L459.17,315.46 L461.13,315.94 L462.61,316.76 L463.38,317.80 Z M456.06,316.60 L460.99,317.26 L459.88,319.78 L454.93,319.11 Z"/><path d="M494.16,323.06 L492.70,324.87 L489.95,326.21 L486.34,326.87 L482.43,326.74 L478.82,325.84 L476.09,324.33 L474.64,322.43 L474.68,320.44 L476.19,318.66 L478.92,317.36 L482.47,316.72 L486.31,316.84 L489.87,317.70 L492.61,319.18 L494.12,321.06 Z M480.82,318.88 L489.75,320.08 L488.00,324.64 L479.00,323.42 Z"/><path d="M522.68,326.91 L521.11,329.00 L518.03,330.55 L513.90,331.32 L509.38,331.16 L505.17,330.12 L501.94,328.36 L500.16,326.16 L500.09,323.86 L501.72,321.81 L504.79,320.31 L508.83,319.57 L513.25,319.71 L517.40,320.71 L520.65,322.42 L522.51,324.59 Z M507.06,322.07 L517.41,323.45 L515.67,328.73 L505.23,327.31 Z"/></g><g fill="none" stroke="#5a5a5a" stroke-width="1.57" shape-rendering="crispEdges"><path d="M195.62,295.93 L193.06,297.72 L189.49,299.05 L185.45,299.71 L181.59,299.60 L178.51,298.72 L176.67,297.24 L176.36,295.37 L177.60,293.41 L180.19,291.65 L183.72,290.36 L187.68,289.72 L191.46,289.83 L194.52,290.67 L196.40,292.12 L196.79,293.97 Z M184.71,291.86 L192.97,293.01 L188.46,297.51 L180.14,296.34 Z"/><path d="M215.31,298.69 L213.45,300.04 L210.82,301.03 L207.82,301.53 L204.93,301.44 L202.59,300.79 L201.16,299.67 L200.85,298.26 L201.71,296.79 L203.58,295.46 L206.19,294.49 L209.14,294.01 L211.99,294.09 L214.32,294.73 L215.77,295.82 L216.12,297.21 Z M206.99,295.62 L213.23,296.49 L210.00,299.88 L203.73,298.99 Z"/><path d="M235.43,301.52 L234.21,302.42 L232.47,303.10 L230.48,303.43 L228.53,303.37 L226.93,302.93 L225.93,302.17 L225.67,301.22 L226.20,300.22 L227.42,299.32 L229.15,298.66 L231.13,298.34 L233.06,298.39 L234.65,298.83 L235.66,299.57 L235.94,300.51 Z M229.72,299.43 L233.96,300.02 L231.89,302.31 L227.63,301.72 Z"/><path d="M259.40,304.88 L257.93,306.03 L255.77,306.88 L253.27,307.29 L250.82,307.22 L248.78,306.66 L247.47,305.70 L247.09,304.50 L247.70,303.24 L249.18,302.10 L251.32,301.27 L253.79,300.86 L256.22,300.93 L258.25,301.48 L259.57,302.42 L259.97,303.61 Z M252.09,302.24 L257.46,302.99 L254.99,305.89 L249.59,305.13 Z"/><path d="M283.90,308.31 L282.17,309.72 L279.60,310.76 L276.57,311.28 L273.55,311.18 L271.03,310.49 L269.38,309.32 L268.86,307.85 L269.53,306.30 L271.28,304.91 L273.84,303.89 L276.82,303.39 L279.79,303.48 L282.29,304.15 L283.96,305.30 L284.53,306.76 Z M274.83,305.08 L281.42,306.00 L278.58,309.55 L271.94,308.61 Z"/><path d="M309.02,311.84 L307.02,313.54 L303.98,314.79 L300.37,315.42 L296.74,315.30 L293.67,314.46 L291.62,313.04 L290.91,311.26 L291.63,309.40 L293.65,307.73 L296.67,306.50 L300.22,305.90 L303.78,306.01 L306.83,306.82 L308.90,308.20 L309.67,309.96 Z M297.93,307.93 L305.90,309.04 L302.69,313.33 L294.66,312.19 Z"/><path d="M333.24,315.23 L331.30,316.96 L328.29,318.24 L324.66,318.87 L320.98,318.75 L317.83,317.90 L315.68,316.45 L314.88,314.64 L315.51,312.75 L317.48,311.05 L320.47,309.81 L324.04,309.20 L327.65,309.31 L330.77,310.13 L332.94,311.54 L333.81,313.33 Z M321.82,311.26 L329.94,312.39 L326.90,316.74 L318.72,315.59 Z"/><path d="M357.93,318.70 L356.06,320.45 L353.07,321.75 L349.42,322.39 L345.69,322.26 L342.46,321.40 L340.22,319.93 L339.31,318.09 L339.86,316.16 L341.76,314.44 L344.73,313.18 L348.31,312.56 L351.98,312.67 L355.18,313.51 L357.44,314.94 L358.41,316.76 Z M346.17,314.65 L354.45,315.81 L351.59,320.23 L343.25,319.05 Z"/><path d="M381.64,322.02 L380.12,323.52 L377.62,324.63 L374.54,325.18 L371.36,325.07 L368.57,324.33 L366.59,323.07 L365.74,321.50 L366.12,319.84 L367.67,318.37 L370.15,317.28 L373.18,316.75 L376.32,316.85 L379.09,317.57 L381.07,318.80 L381.97,320.36 Z M371.44,318.55 L378.56,319.54 L376.30,323.33 L369.14,322.32 Z"/><path d="M405.93,325.43 L404.71,326.69 L402.66,327.62 L400.10,328.08 L397.43,327.99 L395.05,327.37 L393.34,326.31 L392.55,324.98 L392.80,323.59 L394.04,322.34 L396.08,321.42 L398.60,320.98 L401.24,321.06 L403.60,321.67 L405.32,322.71 L406.14,324.03 Z M397.21,322.50 L403.24,323.34 L401.50,326.53 L395.44,325.68 Z"/><path d="M432.06,329.09 L430.89,330.38 L428.86,331.32 L426.29,331.79 L423.58,331.69 L421.14,331.06 L419.35,329.98 L418.49,328.63 L418.67,327.21 L419.86,325.95 L421.87,325.02 L424.41,324.56 L427.09,324.65 L429.51,325.27 L431.30,326.33 L432.20,327.67 Z M423.08,326.11 L429.23,326.96 L427.63,330.21 L421.45,329.34 Z"/><path d="M457.37,332.64 L456.47,333.69 L454.86,334.46 L452.79,334.84 L450.58,334.76 L448.57,334.24 L447.07,333.36 L446.30,332.26 L446.39,331.10 L447.30,330.06 L448.91,329.30 L450.96,328.93 L453.14,329.00 L455.14,329.51 L456.65,330.38 L457.43,331.48 Z M449.94,330.20 L454.98,330.90 L453.81,333.55 L448.75,332.84 Z"/><path d="M487.36,336.85 L486.08,338.45 L483.69,339.64 L480.57,340.21 L477.19,340.09 L474.09,339.29 L471.74,337.94 L470.50,336.26 L470.55,334.49 L471.86,332.91 L474.24,331.75 L477.32,331.19 L480.64,331.31 L483.71,332.08 L486.06,333.40 L487.35,335.07 Z M475.87,333.11 L483.58,334.19 L482.02,338.24 L474.26,337.15 Z"/><path d="M518.17,341.17 L516.54,343.38 L513.36,345.01 L509.12,345.81 L504.48,345.64 L500.17,344.53 L496.87,342.67 L495.06,340.35 L495.01,337.92 L496.71,335.76 L499.87,334.18 L504.03,333.41 L508.56,333.57 L512.81,334.63 L516.13,336.43 L518.02,338.73 Z M502.19,336.04 L512.79,337.51 L510.96,343.08 L500.26,341.57 Z"/></g><g fill="none" stroke="#5a5a5a" stroke-width="1.62" shape-rendering="crispEdges"><path d="M180.05,307.54 L178.41,308.69 L176.15,309.54 L173.61,309.96 L171.20,309.88 L169.27,309.32 L168.14,308.36 L167.97,307.16 L168.77,305.90 L170.42,304.76 L172.67,303.93 L175.17,303.52 L177.56,303.59 L179.47,304.14 L180.62,305.08 L180.83,306.27 Z M173.27,304.90 L178.45,305.65 L175.53,308.55 L170.33,307.79 Z"/><path d="M203.68,310.99 L201.74,312.40 L199.03,313.44 L195.95,313.96 L193.00,313.86 L190.62,313.17 L189.18,311.99 L188.91,310.52 L189.82,308.97 L191.77,307.58 L194.46,306.56 L197.49,306.06 L200.40,306.15 L202.77,306.82 L204.22,307.97 L204.55,309.44 Z M195.25,307.75 L201.61,308.67 L198.22,312.23 L191.83,311.29 Z"/><path d="M227.90,314.53 L225.65,316.23 L222.44,317.49 L218.77,318.11 L215.21,317.99 L212.31,317.15 L210.53,315.73 L210.11,313.95 L211.13,312.08 L213.40,310.41 L216.57,309.18 L220.18,308.58 L223.68,308.69 L226.55,309.50 L228.37,310.89 L228.85,312.65 Z M217.58,310.61 L225.27,311.73 L221.40,316.02 L213.66,314.88 Z"/><path d="M248.66,317.56 L247.12,318.76 L244.90,319.65 L242.33,320.09 L239.81,320.01 L237.74,319.41 L236.42,318.41 L236.07,317.14 L236.72,315.82 L238.26,314.63 L240.47,313.75 L243.01,313.33 L245.49,313.41 L247.55,313.98 L248.88,314.97 L249.27,316.23 Z M241.24,314.77 L246.72,315.57 L244.12,318.61 L238.61,317.80 Z"/><path d="M272.41,321.03 L270.91,322.25 L268.70,323.16 L266.13,323.60 L263.57,323.51 L261.45,322.91 L260.07,321.89 L259.64,320.60 L260.24,319.25 L261.75,318.04 L263.94,317.15 L266.49,316.72 L269.00,316.80 L271.12,317.39 L272.51,318.40 L272.97,319.67 Z M264.76,318.19 L270.35,319.00 L267.86,322.10 L262.25,321.27 Z"/><path d="M297.91,324.75 L296.15,326.25 L293.51,327.36 L290.38,327.91 L287.26,327.80 L284.62,327.06 L282.88,325.80 L282.30,324.22 L282.94,322.57 L284.72,321.09 L287.34,320.00 L290.42,319.47 L293.50,319.57 L296.11,320.29 L297.87,321.53 L298.51,323.09 Z M288.41,321.27 L295.27,322.27 L292.42,326.06 L285.52,325.05 Z"/><path d="M324.06,328.57 L322.05,330.38 L318.93,331.73 L315.20,332.38 L311.43,332.25 L308.22,331.35 L306.05,329.83 L305.26,327.92 L305.95,325.92 L308.00,324.14 L311.09,322.84 L314.75,322.20 L318.45,322.33 L321.63,323.19 L323.82,324.68 L324.68,326.56 Z M312.44,324.37 L320.74,325.57 L317.54,330.15 L309.18,328.92 Z"/><path d="M347.84,332.04 L346.19,333.59 L343.59,334.74 L340.44,335.30 L337.22,335.19 L334.44,334.42 L332.53,333.11 L331.77,331.48 L332.27,329.77 L333.94,328.24 L336.52,327.12 L339.63,326.58 L342.79,326.68 L345.55,327.43 L347.48,328.71 L348.28,330.32 Z M337.74,328.43 L344.88,329.47 L342.34,333.39 L335.16,332.34 Z"/><path d="M373.55,335.80 L371.96,337.37 L369.39,338.54 L366.22,339.11 L362.96,338.99 L360.11,338.21 L358.11,336.88 L357.26,335.22 L357.68,333.48 L359.29,331.92 L361.85,330.79 L364.97,330.23 L368.18,330.34 L371.00,331.10 L373.02,332.40 L373.92,334.05 Z M363.15,332.12 L370.43,333.18 L368.05,337.17 L360.73,336.09 Z"/><path d="M398.40,339.42 L397.13,340.75 L395.02,341.73 L392.39,342.21 L389.65,342.11 L387.22,341.45 L385.48,340.33 L384.69,338.93 L384.97,337.46 L386.26,336.15 L388.36,335.19 L390.96,334.72 L393.66,334.82 L396.07,335.46 L397.82,336.56 L398.64,337.95 Z M389.51,336.32 L395.68,337.22 L393.84,340.58 L387.65,339.67 Z"/><path d="M425.15,343.33 L423.93,344.68 L421.84,345.68 L419.20,346.17 L416.42,346.06 L413.93,345.39 L412.11,344.25 L411.24,342.82 L411.44,341.33 L412.68,339.99 L414.76,339.02 L417.37,338.54 L420.12,338.64 L422.59,339.30 L424.42,340.41 L425.32,341.83 Z M415.99,340.17 L422.28,341.08 L420.59,344.50 L414.27,343.57 Z"/><path d="M455.50,347.76 L453.84,349.74 L450.87,351.20 L447.07,351.90 L443.01,351.75 L439.34,350.76 L436.62,349.09 L435.26,347.01 L435.46,344.83 L437.17,342.90 L440.11,341.48 L443.85,340.80 L447.83,340.94 L451.45,341.89 L454.19,343.52 L455.62,345.57 Z M441.96,343.15 L451.14,344.48 L448.96,349.47 L439.71,348.11 Z"/><path d="M481.82,351.60 L480.48,353.29 L478.02,354.54 L474.80,355.15 L471.34,355.02 L468.16,354.17 L465.77,352.74 L464.51,350.95 L464.58,349.09 L465.95,347.42 L468.40,346.21 L471.57,345.62 L474.98,345.74 L478.12,346.56 L480.52,347.96 L481.83,349.73 Z M470.06,347.64 L477.96,348.79 L476.32,353.07 L468.36,351.90 Z"/><path d="M508.80,355.54 L507.75,356.97 L505.74,358.02 L503.07,358.53 L500.15,358.42 L497.45,357.70 L495.37,356.50 L494.24,354.99 L494.21,353.41 L495.29,352.01 L497.29,350.98 L499.93,350.48 L502.80,350.59 L505.48,351.28 L507.57,352.47 L508.73,353.96 Z M498.75,352.19 L505.45,353.17 L504.25,356.78 L497.51,355.79 Z"/></g><g fill="none" stroke="#5a5a5a" stroke-width="1.66" shape-rendering="crispEdges"><path d="M166.25,320.07 L164.87,321.04 L162.99,321.75 L160.90,322.10 L158.91,322.04 L157.35,321.56 L156.43,320.75 L156.31,319.73 L157.00,318.66 L158.38,317.70 L160.25,317.00 L162.32,316.66 L164.29,316.72 L165.85,317.19 L166.77,317.99 L166.91,319.00 Z M160.73,317.82 L164.97,318.47 L162.51,320.92 L158.25,320.26 Z"/><path d="M193.96,324.29 L191.24,326.29 L187.44,327.77 L183.17,328.50 L179.07,328.35 L175.81,327.36 L173.87,325.68 L173.55,323.58 L174.88,321.38 L177.63,319.42 L181.38,317.99 L185.57,317.28 L189.58,317.42 L192.82,318.37 L194.79,320.00 L195.20,322.08 Z M182.42,319.67 L191.16,320.99 L186.37,326.03 L177.56,324.68 Z"/><path d="M214.82,327.46 L212.84,328.96 L210.05,330.07 L206.88,330.62 L203.81,330.51 L201.33,329.76 L199.82,328.50 L199.50,326.92 L200.41,325.27 L202.40,323.79 L205.16,322.70 L208.29,322.17 L211.31,322.27 L213.77,323.00 L215.31,324.23 L215.68,325.80 Z M206.01,323.97 L212.62,324.97 L209.19,328.77 L202.54,327.75 Z"/><path d="M240.01,331.29 L237.72,333.11 L234.43,334.45 L230.64,335.11 L226.94,334.97 L223.91,334.07 L222.03,332.54 L221.56,330.63 L222.56,328.64 L224.87,326.85 L228.14,325.55 L231.86,324.91 L235.49,325.04 L238.49,325.91 L240.41,327.39 L240.94,329.28 Z M229.22,327.08 L237.22,328.29 L233.31,332.87 L225.26,331.64 Z"/><path d="M261.61,334.58 L260.05,335.87 L257.77,336.81 L255.12,337.28 L252.51,337.18 L250.34,336.54 L248.95,335.46 L248.55,334.11 L249.19,332.69 L250.76,331.42 L253.03,330.49 L255.64,330.03 L258.22,330.12 L260.38,330.75 L261.78,331.81 L262.22,333.15 Z M253.85,331.58 L259.55,332.44 L256.94,335.70 L251.20,334.82 Z"/><path d="M286.35,338.34 L284.84,339.65 L282.57,340.62 L279.91,341.09 L277.26,340.99 L275.03,340.34 L273.57,339.24 L273.10,337.86 L273.67,336.41 L275.21,335.12 L277.46,334.18 L280.09,333.72 L282.70,333.81 L284.91,334.44 L286.39,335.52 L286.89,336.89 Z M278.34,335.29 L284.16,336.17 L281.67,339.48 L275.82,338.58 Z"/><path d="M311.59,342.18 L310.12,343.51 L307.87,344.49 L305.20,344.97 L302.51,344.87 L300.22,344.21 L298.69,343.09 L298.14,341.68 L298.66,340.21 L300.14,338.90 L302.38,337.94 L305.02,337.47 L307.67,337.57 L309.94,338.21 L311.49,339.31 L312.07,340.71 Z M303.33,339.07 L309.26,339.97 L306.90,343.34 L300.94,342.42 Z"/><path d="M337.35,346.10 L335.92,347.45 L333.70,348.45 L331.01,348.94 L328.28,348.83 L325.93,348.16 L324.32,347.02 L323.70,345.59 L324.15,344.09 L325.59,342.75 L327.80,341.78 L330.46,341.30 L333.15,341.40 L335.48,342.06 L337.10,343.18 L337.76,344.60 Z M328.82,342.93 L334.88,343.85 L332.65,347.27 L326.57,346.34 Z"/><path d="M363.63,350.10 L362.26,351.48 L360.05,352.49 L357.35,352.98 L354.58,352.88 L352.17,352.19 L350.48,351.03 L349.78,349.57 L350.16,348.05 L351.56,346.69 L353.75,345.70 L356.41,345.21 L359.14,345.32 L361.54,345.99 L363.24,347.13 L363.98,348.57 Z M354.84,346.87 L361.02,347.81 L358.94,351.29 L352.72,350.34 Z"/><path d="M390.47,354.18 L389.14,355.58 L386.96,356.62 L384.25,357.12 L381.44,357.01 L378.96,356.30 L377.19,355.12 L376.41,353.64 L376.71,352.09 L378.06,350.70 L380.23,349.69 L382.91,349.21 L385.68,349.31 L388.14,349.99 L389.92,351.16 L390.74,352.63 Z M381.39,350.89 L387.70,351.85 L385.77,355.39 L379.43,354.42 Z"/><path d="M420.92,358.81 L419.11,360.86 L416.01,362.37 L412.11,363.11 L408.01,362.94 L404.35,361.91 L401.70,360.17 L400.47,358.01 L400.81,355.75 L402.67,353.75 L405.75,352.28 L409.58,351.57 L413.60,351.73 L417.21,352.72 L419.87,354.41 L421.18,356.55 Z M407.51,354.02 L416.72,355.41 L414.19,360.58 L404.90,359.16 Z"/><path d="M447.34,362.83 L445.88,364.59 L443.30,365.88 L440.01,366.51 L436.50,366.36 L433.34,365.48 L431.00,363.99 L429.85,362.14 L430.04,360.20 L431.54,358.48 L434.10,357.22 L437.34,356.61 L440.79,356.74 L443.92,357.60 L446.27,359.05 L447.47,360.89 Z M435.69,358.71 L443.62,359.91 L441.67,364.35 L433.69,363.12 Z"/><path d="M479.07,367.66 L477.21,370.08 L473.77,371.86 L469.29,372.73 L464.47,372.53 L460.07,371.30 L456.78,369.25 L455.08,366.69 L455.22,364.03 L457.15,361.67 L460.57,359.95 L464.95,359.12 L469.66,359.30 L473.99,360.47 L477.31,362.46 L479.10,364.98 Z M462.83,361.99 L473.75,363.64 L471.42,369.74 L460.39,368.05 Z"/><path d="M503.65,371.40 L502.56,372.91 L500.48,374.02 L497.73,374.55 L494.73,374.43 L491.96,373.66 L489.84,372.38 L488.69,370.79 L488.68,369.12 L489.80,367.64 L491.87,366.55 L494.59,366.03 L497.54,366.15 L500.28,366.89 L502.41,368.14 L503.60,369.73 Z M493.36,367.84 L500.23,368.88 L498.96,372.70 L492.05,371.64 Z"/></g><g fill="none" stroke="#5a5a5a" stroke-width="1.71" shape-rendering="crispEdges"><path d="M156.60,333.99 L154.05,335.81 L150.58,337.15 L146.73,337.81 L143.11,337.68 L140.27,336.77 L138.65,335.24 L138.50,333.33 L139.82,331.33 L142.39,329.54 L145.82,328.24 L149.60,327.60 L153.16,327.73 L155.98,328.60 L157.63,330.09 L157.86,331.98 Z M146.64,329.77 L154.34,330.98 L149.74,335.57 L141.99,334.34 Z"/><path d="M179.99,337.70 L177.49,339.55 L174.04,340.92 L170.17,341.58 L166.49,341.44 L163.58,340.52 L161.87,338.97 L161.63,337.02 L162.87,334.99 L165.39,333.17 L168.81,331.84 L172.60,331.20 L176.21,331.33 L179.11,332.22 L180.85,333.73 L181.16,335.66 Z M169.71,333.40 L177.56,334.64 L173.11,339.31 L165.21,338.04 Z"/><path d="M201.19,341.06 L199.48,342.38 L197.09,343.34 L194.39,343.81 L191.79,343.71 L189.70,343.06 L188.44,341.96 L188.19,340.58 L189.00,339.13 L190.72,337.84 L193.10,336.89 L195.77,336.43 L198.33,336.53 L200.41,337.16 L201.69,338.24 L201.97,339.61 Z M193.79,338.01 L199.38,338.89 L196.39,342.20 L190.76,341.31 Z"/><path d="M226.76,345.12 L224.75,346.73 L221.88,347.92 L218.60,348.49 L215.42,348.37 L212.82,347.57 L211.22,346.21 L210.85,344.51 L211.76,342.74 L213.79,341.16 L216.63,340.00 L219.86,339.44 L223.00,339.55 L225.57,340.33 L227.20,341.66 L227.62,343.34 Z M217.54,341.37 L224.42,342.45 L220.95,346.52 L214.03,345.41 Z"/><path d="M253.01,349.28 L250.68,351.23 L247.30,352.67 L243.38,353.36 L239.53,353.21 L236.37,352.24 L234.37,350.59 L233.84,348.54 L234.83,346.40 L237.19,344.49 L240.54,343.10 L244.38,342.42 L248.15,342.57 L251.29,343.50 L253.32,345.10 L253.93,347.13 Z M241.70,344.74 L250.03,346.06 L246.10,350.97 L237.71,349.63 Z"/><path d="M274.26,352.66 L272.98,353.76 L271.10,354.58 L268.90,354.97 L266.72,354.89 L264.89,354.33 L263.71,353.40 L263.34,352.23 L263.84,351.00 L265.12,349.91 L267.00,349.11 L269.17,348.72 L271.33,348.80 L273.14,349.34 L274.34,350.26 L274.73,351.43 Z M267.71,350.05 L272.49,350.81 L270.38,353.61 L265.57,352.85 Z"/><path d="M302.71,357.17 L300.86,358.86 L298.06,360.11 L294.73,360.72 L291.40,360.58 L288.59,359.73 L286.72,358.30 L286.08,356.51 L286.76,354.64 L288.64,352.97 L291.42,351.76 L294.69,351.17 L297.97,351.29 L300.76,352.12 L302.64,353.52 L303.33,355.29 Z M292.56,353.20 L299.88,354.35 L296.88,358.63 L289.52,357.46 Z"/><path d="M327.69,361.13 L326.21,362.56 L323.90,363.61 L321.14,364.12 L318.34,364.01 L315.94,363.29 L314.31,362.08 L313.70,360.57 L314.19,358.99 L315.69,357.58 L317.98,356.55 L320.71,356.06 L323.47,356.16 L325.85,356.86 L327.50,358.05 L328.14,359.55 Z M319.01,357.77 L325.20,358.75 L322.86,362.36 L316.63,361.37 Z"/><path d="M353.25,365.19 L352.09,366.35 L350.26,367.21 L348.02,367.63 L345.74,367.53 L343.76,366.94 L342.39,365.96 L341.82,364.72 L342.16,363.43 L343.32,362.27 L345.15,361.43 L347.36,361.02 L349.61,361.11 L351.58,361.69 L352.97,362.66 L353.55,363.89 Z M346.03,362.43 L351.12,363.23 L349.36,366.19 L344.24,365.38 Z"/><path d="M385.15,370.25 L383.18,372.37 L379.94,373.94 L375.93,374.69 L371.79,374.52 L368.15,373.44 L365.59,371.64 L364.48,369.39 L364.98,367.05 L367.00,364.96 L370.21,363.45 L374.14,362.72 L378.20,362.88 L381.80,363.92 L384.38,365.67 L385.57,367.89 Z M371.88,365.25 L381.12,366.71 L378.21,372.08 L368.90,370.59 Z"/><path d="M411.67,374.45 L410.07,376.28 L407.37,377.61 L403.99,378.26 L400.45,378.11 L397.30,377.19 L395.03,375.64 L393.98,373.71 L394.30,371.70 L395.93,369.91 L398.62,368.61 L401.94,367.98 L405.42,368.12 L408.54,369.01 L410.83,370.52 L411.93,372.43 Z M400.12,370.16 L408.08,371.41 L405.82,376.02 L397.81,374.74 Z"/><path d="M438.88,378.77 L437.61,380.31 L435.40,381.44 L432.59,381.98 L429.60,381.85 L426.92,381.07 L424.95,379.76 L423.98,378.14 L424.16,376.44 L425.45,374.92 L427.65,373.82 L430.43,373.29 L433.36,373.41 L436.02,374.17 L438.01,375.45 L439.01,377.06 Z M428.99,375.13 L435.74,376.20 L434.03,380.09 L427.24,379.01 Z"/><path d="M471.48,383.94 L469.76,386.19 L466.64,387.84 L462.58,388.64 L458.23,388.45 L454.27,387.30 L451.31,385.39 L449.80,383.00 L449.95,380.53 L451.72,378.32 L454.82,376.72 L458.80,375.96 L463.06,376.14 L466.97,377.24 L469.94,379.10 L471.53,381.45 Z M456.85,378.63 L466.71,380.19 L464.54,385.87 L454.59,384.28 Z"/><path d="M499.80,388.43 L498.43,390.36 L495.83,391.78 L492.41,392.46 L488.69,392.29 L485.25,391.31 L482.64,389.67 L481.24,387.62 L481.25,385.49 L482.66,383.60 L485.25,382.22 L488.61,381.56 L492.26,381.72 L495.66,382.67 L498.28,384.27 L499.74,386.29 Z M487.07,383.87 L495.57,385.21 L493.95,390.08 L485.39,388.72 Z"/></g><g fill="none" stroke="#5a5a5a" stroke-width="1.75" shape-rendering="crispEdges"><path d="M141.28,347.84 L139.03,349.45 L136.01,350.63 L132.68,351.21 L129.55,351.09 L127.13,350.28 L125.77,348.92 L125.68,347.22 L126.86,345.45 L129.12,343.86 L132.12,342.71 L135.40,342.14 L138.47,342.26 L140.89,343.04 L142.27,344.37 L142.42,346.05 Z M132.79,344.07 L139.40,345.16 L135.32,349.23 L128.67,348.12 Z"/><path d="M166.50,352.01 L163.89,353.96 L160.32,355.39 L156.33,356.09 L152.57,355.94 L149.60,354.96 L147.90,353.32 L147.71,351.26 L149.03,349.12 L151.67,347.21 L155.20,345.81 L159.11,345.14 L162.81,345.28 L165.75,346.22 L167.49,347.83 L167.76,349.86 Z M156.08,347.46 L164.09,348.78 L159.41,353.69 L151.35,352.35 Z"/><path d="M192.08,356.25 L189.18,358.50 L185.14,360.17 L180.58,360.97 L176.23,360.79 L172.77,359.66 L170.72,357.75 L170.39,355.37 L171.82,352.89 L174.75,350.68 L178.74,349.08 L183.20,348.30 L187.46,348.47 L190.89,349.55 L192.99,351.40 L193.41,353.75 Z M179.84,350.98 L189.13,352.50 L184.00,358.19 L174.64,356.63 Z"/><path d="M216.96,360.37 L214.13,362.66 L210.11,364.35 L205.54,365.17 L201.12,364.99 L197.56,363.83 L195.39,361.89 L194.95,359.46 L196.28,356.94 L199.15,354.70 L203.12,353.06 L207.59,352.27 L211.91,352.44 L215.44,353.55 L217.65,355.44 L218.19,357.83 Z M204.32,355.00 L213.79,356.55 L208.87,362.34 L199.31,360.75 Z"/><path d="M239.61,364.11 L237.56,365.84 L234.61,367.11 L231.21,367.73 L227.90,367.59 L225.19,366.72 L223.49,365.25 L223.06,363.43 L223.96,361.52 L226.03,359.83 L228.96,358.59 L232.30,357.99 L235.56,358.12 L238.25,358.97 L239.97,360.39 L240.45,362.20 Z M229.93,360.06 L237.11,361.24 L233.61,365.60 L226.39,364.40 Z"/><path d="M267.00,368.65 L264.63,370.74 L261.15,372.28 L257.10,373.02 L253.10,372.85 L249.78,371.79 L247.66,370.02 L247.05,367.81 L248.03,365.51 L250.42,363.46 L253.87,361.97 L257.85,361.25 L261.77,361.41 L265.05,362.43 L267.21,364.15 L267.89,366.34 Z M255.12,363.74 L263.81,365.17 L259.86,370.45 L251.10,368.99 Z"/><path d="M293.46,373.03 L291.17,375.16 L287.72,376.72 L283.64,377.48 L279.58,377.30 L276.17,376.22 L273.93,374.42 L273.21,372.17 L274.09,369.82 L276.42,367.74 L279.84,366.22 L283.83,365.49 L287.81,365.66 L291.19,366.69 L293.46,368.45 L294.26,370.67 Z M281.19,368.03 L290.07,369.49 L286.32,374.86 L277.37,373.37 Z"/><path d="M318.93,377.25 L317.06,379.07 L314.18,380.41 L310.73,381.05 L307.26,380.90 L304.31,379.98 L302.32,378.43 L301.61,376.50 L302.25,374.49 L304.16,372.70 L307.01,371.39 L310.40,370.77 L313.81,370.91 L316.74,371.80 L318.75,373.32 L319.52,375.23 Z M308.25,372.95 L315.89,374.20 L312.91,378.81 L305.21,377.53 Z"/><path d="M346.53,381.82 L344.72,383.67 L341.86,385.04 L338.41,385.69 L334.88,385.54 L331.84,384.59 L329.75,383.01 L328.93,381.05 L329.49,378.99 L331.32,377.17 L334.16,375.84 L337.56,375.21 L341.02,375.35 L344.03,376.27 L346.14,377.81 L347.02,379.76 Z M335.48,377.43 L343.30,378.71 L340.50,383.41 L332.63,382.10 Z"/><path d="M374.73,386.49 L372.99,388.38 L370.17,389.77 L366.69,390.43 L363.11,390.27 L359.98,389.31 L357.78,387.70 L356.85,385.69 L357.31,383.60 L359.08,381.74 L361.89,380.39 L365.31,379.75 L368.83,379.90 L371.92,380.83 L374.14,382.40 L375.13,384.39 Z M363.32,382.01 L371.30,383.32 L368.70,388.11 L360.66,386.77 Z"/><path d="M406.70,391.78 L404.46,394.39 L400.68,396.31 L395.96,397.23 L391.03,397.00 L386.67,395.67 L383.56,393.44 L382.16,390.67 L382.67,387.80 L384.97,385.25 L388.72,383.40 L393.33,382.52 L398.14,382.73 L402.44,384.00 L405.58,386.16 L407.09,388.89 Z M390.77,385.61 L401.77,387.42 L398.55,394.01 L387.44,392.16 Z"/><path d="M434.77,396.43 L432.88,398.76 L429.60,400.48 L425.43,401.30 L421.03,401.09 L417.09,399.90 L414.21,397.90 L412.83,395.42 L413.15,392.85 L415.09,390.56 L418.34,388.90 L422.43,388.11 L426.73,388.30 L430.63,389.45 L433.53,391.38 L434.99,393.83 Z M420.28,390.89 L430.18,392.51 L427.60,398.42 L417.61,396.75 Z"/><path d="M464.96,401.42 L463.17,403.81 L459.93,405.56 L455.75,406.39 L451.27,406.18 L447.21,404.96 L444.19,402.92 L442.66,400.39 L442.85,397.76 L444.70,395.43 L447.92,393.74 L452.02,392.94 L456.39,393.13 L460.40,394.30 L463.44,396.28 L465.05,398.78 Z M449.98,395.77 L460.10,397.43 L457.80,403.46 L447.58,401.75 Z"/><path d="M494.06,406.24 L492.63,408.29 L489.94,409.79 L486.41,410.50 L482.58,410.32 L479.06,409.27 L476.39,407.52 L474.97,405.35 L475.00,403.09 L476.48,401.08 L479.15,399.62 L482.62,398.93 L486.38,399.10 L489.86,400.12 L492.55,401.82 L494.03,403.97 Z M481.01,401.37 L489.74,402.81 L488.03,407.98 L479.23,406.52 Z"/></g><g fill="none" stroke="#5a5a5a" stroke-width="1.80" shape-rendering="crispEdges"><path d="M127.93,362.88 L125.14,364.90 L121.41,366.39 L117.33,367.11 L113.53,366.94 L110.60,365.93 L109.00,364.22 L108.95,362.09 L110.46,359.86 L113.27,357.89 L116.95,356.44 L120.95,355.75 L124.69,355.90 L127.59,356.88 L129.24,358.55 L129.36,360.65 Z M117.72,358.15 L125.73,359.53 L120.62,364.62 L112.56,363.22 Z"/><path d="M150.87,366.85 L148.56,368.58 L145.44,369.85 L141.99,370.46 L138.75,370.32 L136.21,369.45 L134.78,367.99 L134.65,366.16 L135.85,364.25 L138.17,362.56 L141.26,361.32 L144.65,360.72 L147.84,360.85 L150.36,361.70 L151.83,363.13 L152.01,364.94 Z M141.98,362.79 L148.87,363.97 L144.70,368.34 L137.77,367.13 Z"/><path d="M177.15,371.40 L174.48,373.49 L170.79,375.03 L166.67,375.77 L162.75,375.60 L159.65,374.54 L157.85,372.76 L157.61,370.55 L158.94,368.25 L161.64,366.20 L165.29,364.71 L169.33,363.99 L173.17,364.15 L176.25,365.17 L178.09,366.90 L178.41,369.08 Z M166.23,366.48 L174.58,367.92 L169.82,373.20 L161.41,371.73 Z"/><path d="M198.45,375.08 L196.98,376.27 L194.93,377.15 L192.61,377.57 L190.39,377.47 L188.60,376.87 L187.52,375.86 L187.31,374.59 L188.01,373.28 L189.48,372.10 L191.52,371.24 L193.81,370.83 L196.01,370.92 L197.79,371.51 L198.88,372.51 L199.12,373.76 Z M192.11,372.26 L196.91,373.09 L194.33,376.10 L189.51,375.27 Z"/><path d="M225.61,379.78 L223.83,381.29 L221.30,382.40 L218.39,382.93 L215.58,382.80 L213.29,382.04 L211.87,380.76 L211.54,379.16 L212.34,377.48 L214.14,376.00 L216.66,374.91 L219.52,374.39 L222.29,374.51 L224.57,375.26 L226.00,376.52 L226.37,378.10 Z M217.46,376.21 L223.55,377.25 L220.48,381.07 L214.36,380.01 Z"/><path d="M256.34,385.09 L253.53,387.61 L249.43,389.46 L244.66,390.35 L239.99,390.13 L236.14,388.85 L233.72,386.71 L233.07,384.05 L234.28,381.28 L237.13,378.82 L241.19,377.04 L245.85,376.19 L250.41,376.39 L254.22,377.61 L256.69,379.69 L257.45,382.31 Z M242.60,379.17 L252.71,380.90 L247.96,387.25 L237.76,385.47 Z"/><path d="M283.47,389.79 L280.74,392.35 L276.66,394.23 L271.88,395.13 L267.13,394.91 L263.17,393.60 L260.61,391.42 L259.82,388.70 L260.91,385.89 L263.69,383.38 L267.72,381.57 L272.39,380.70 L277.03,380.91 L280.95,382.16 L283.55,384.27 L284.45,386.95 Z M269.25,383.74 L279.58,385.51 L275.07,391.98 L264.65,390.16 Z"/><path d="M311.19,394.58 L308.55,397.19 L304.51,399.11 L299.70,400.03 L294.88,399.80 L290.80,398.46 L288.09,396.23 L287.17,393.47 L288.14,390.59 L290.83,388.04 L294.82,386.20 L299.52,385.31 L304.23,385.53 L308.26,386.80 L311.01,388.96 L312.05,391.69 Z M296.48,388.41 L307.04,390.22 L302.79,396.81 L292.13,394.95 Z"/><path d="M339.54,399.48 L336.99,402.15 L332.99,404.10 L328.16,405.04 L323.26,404.80 L319.05,403.43 L316.20,401.16 L315.13,398.34 L315.97,395.41 L318.57,392.81 L322.53,390.93 L327.25,390.03 L332.04,390.25 L336.19,391.55 L339.08,393.75 L340.27,396.54 Z M324.32,393.18 L335.12,395.03 L331.13,401.75 L320.23,399.85 Z"/><path d="M363.85,403.69 L362.34,405.35 L359.91,406.56 L356.94,407.14 L353.89,407.00 L351.24,406.15 L349.39,404.73 L348.62,402.96 L349.04,401.13 L350.57,399.49 L352.99,398.30 L355.91,397.74 L358.92,397.88 L361.55,398.70 L363.42,400.09 L364.23,401.84 Z M354.18,399.73 L360.98,400.90 L358.69,405.10 L351.85,403.91 Z"/><path d="M391.91,408.54 L390.74,409.90 L388.82,410.89 L386.42,411.37 L383.93,411.25 L381.73,410.55 L380.17,409.39 L379.46,407.94 L379.73,406.43 L380.91,405.09 L382.83,404.12 L385.20,403.65 L387.66,403.77 L389.84,404.45 L391.42,405.59 L392.15,407.03 Z M383.87,405.29 L389.46,406.25 L387.76,409.70 L382.14,408.72 Z"/><path d="M427.02,414.61 L425.04,417.09 L421.64,418.91 L417.34,419.78 L412.81,419.55 L408.77,418.27 L405.83,416.14 L404.45,413.51 L404.82,410.77 L406.85,408.35 L410.22,406.59 L414.43,405.76 L418.86,405.97 L422.85,407.19 L425.81,409.26 L427.28,411.86 Z M412.18,408.71 L422.35,410.45 L419.61,416.72 L409.35,414.93 Z"/><path d="M456.24,419.67 L454.66,421.80 L451.84,423.35 L448.20,424.09 L444.33,423.90 L440.82,422.80 L438.22,420.97 L436.92,418.71 L437.10,416.36 L438.73,414.27 L441.53,412.76 L445.11,412.04 L448.91,412.22 L452.37,413.28 L454.99,415.06 L456.35,417.30 Z M443.31,414.58 L452.08,416.09 L450.01,421.47 L441.17,419.93 Z"/><path d="M491.43,425.75 L489.42,428.69 L485.66,430.85 L480.72,431.87 L475.38,431.60 L470.48,430.07 L466.80,427.54 L464.87,424.42 L464.97,421.18 L467.06,418.31 L470.80,416.24 L475.62,415.26 L480.82,415.51 L485.64,416.97 L489.35,419.41 L491.39,422.49 Z M473.34,418.74 L485.45,420.82 L483.01,428.24 L470.77,426.11 Z"/>
</g>
<path d="M349.2,297 L349,294 M348.6,280.5 L348.2,275 M347.8,260.5 L347.5,256 M347,242 L346.7,236.5 M346.3,229.5 L346.2,227.5" stroke="#e00000" stroke-width="1.3" fill="none" shape-rendering="crispEdges"/>
<path d="M349.4,296.2 L372.5,263.8" stroke="#00c000" stroke-width="1" stroke-dasharray="2,3" fill="none"/>
<path d="M349.4,296.2 L422,308.3" stroke="#0000ff" stroke-width="1" stroke-dasharray="3,4" fill="none"/>
</svg>
<div class="abs" style="left:698px;top:21px;width:3px;height:550px;background:#fff"></div><div class="abs" style="left:700px;top:0;width:1px;height:21px;background:#fff"></div>
<div class="abs" style="left:701px;top:25px;width:256px;height:546px;border:1px solid #898e98;border-bottom:none;background:#fff"></div>
<div class="abs" style="left:701px;top:0;width:106px;height:26px;border:1px solid #898e98;border-bottom:none;background:#fff"></div>
<div class="abs" style="left:707px;top:7px;letter-spacing:0.12px">Import DIA file</div>
<svg class="abs" style="left:788px;top:10px" width="6" height="6" shape-rendering="crispEdges" fill="#000"><rect x="1" y="0" width="1" height="1"/><rect x="5" y="0" width="1" height="1"/><rect x="0" y="1" width="1" height="1"/><rect x="1" y="1" width="1" height="1"/><rect x="2" y="1" width="1" height="1"/><rect x="4" y="1" width="1" height="1"/><rect x="5" y="1" width="1" height="1"/><rect x="1" y="2" width="1" height="1"/><rect x="2" y="2" width="1" height="1"/><rect x="3" y="2" width="1" height="1"/><rect x="4" y="2" width="1" height="1"/><rect x="2" y="3" width="1" height="1"/><rect x="3" y="3" width="1" height="1"/><rect x="4" y="3" width="1" height="1"/><rect x="1" y="4" width="1" height="1"/><rect x="2" y="4" width="1" height="1"/><rect x="4" y="4" width="1" height="1"/><rect x="5" y="4" width="1" height="1"/><rect x="0" y="5" width="1" height="1"/><rect x="1" y="5" width="1" height="1"/><rect x="4" y="5" width="1" height="1"/><rect x="5" y="5" width="1" height="1"/></svg>
<!-- toolbar icons -->
<svg class="abs" style="left:715px;top:37px" width="44" height="20">
<defs><linearGradient id="dg" x1="0" y1="0" x2="1" y2="1"><stop offset="0" stop-color="#e6e6e6"/><stop offset="1" stop-color="#fdfdfd"/></linearGradient></defs>
<path d="M2.5,3.5 Q2.5,2.5 3.5,2.5 H14.5 V13 L10,17.5 H3.5 Q2.5,17.5 2.5,16.5 Z" fill="url(#dg)" stroke="#c6c6c6"/>
<path d="M10,17.5 L14.5,13" fill="none" stroke="#9a9a9a" stroke-dasharray="1,1"/>
<circle cx="14.4" cy="5.4" r="3.8" fill="#1ea01e"/>
<path d="M14.4,2.9 V7.9 M11.9,5.4 H16.9" stroke="#fff" stroke-width="1.7"/>
<defs><linearGradient id="rx" x1="0" y1="0" x2="1" y2="1"><stop offset="0" stop-color="#e89090"/><stop offset="0.5" stop-color="#e03020"/><stop offset="1" stop-color="#f07050"/></linearGradient></defs><path d="M29,6 L37,14 M37,6 L29,14" stroke="url(#rx)" stroke-width="3.5" stroke-linecap="round"/>
</svg>
<!-- table -->
<div class="abs" style="left:713px;top:66px;width:233px;height:505px;border:1px solid #898e98;background:#f0f0f0;box-shadow:inset -1px -1px 0 #fff"></div>
<div class="abs" style="left:714px;top:67px;width:231px;height:23px;background:linear-gradient(#fff 0,#fff 8px,#f0f0f3 9px,#eceef1 22px);border-bottom:1px solid #e0e2e6"></div>
<div class="abs" style="left:789px;top:67px;width:1px;height:22px;background:#dcdde2"></div>
<div class="abs" style="left:866px;top:67px;width:1px;height:22px;background:#dcdde2"></div>
<div class="abs" style="left:718px;top:74px;letter-spacing:-0.25px">Filename</div>
<div class="abs" style="left:795px;top:74px;letter-spacing:0.3px">Type</div>
<div class="abs" style="left:872px;top:74px;letter-spacing:-0.15px">Polarization</div><div class="abs" style="left:943px;top:67px;width:1px;height:22px;background:#dcdde2"></div>
<div class="abs" style="left:714px;top:90px;width:231px;height:18px;background:#fff;border-bottom:1px solid #6f737a"></div>
<div class="abs" style="left:790px;top:92px;width:1px;height:16px;background:#6f737a"></div>
<div class="abs" style="left:867px;top:92px;width:1px;height:16px;background:#6f737a"></div>
<div class="abs" style="left:944px;top:92px;width:1px;height:16px;background:#6f737a"></div>
<div class="abs" style="left:714px;top:93px;letter-spacing:-0.2px">BOC0677.DIA</div>
<div class="abs" style="left:791px;top:93px">RV2</div>
<div class="abs" style="left:868px;top:93px">LIN</div>
</body></html>
